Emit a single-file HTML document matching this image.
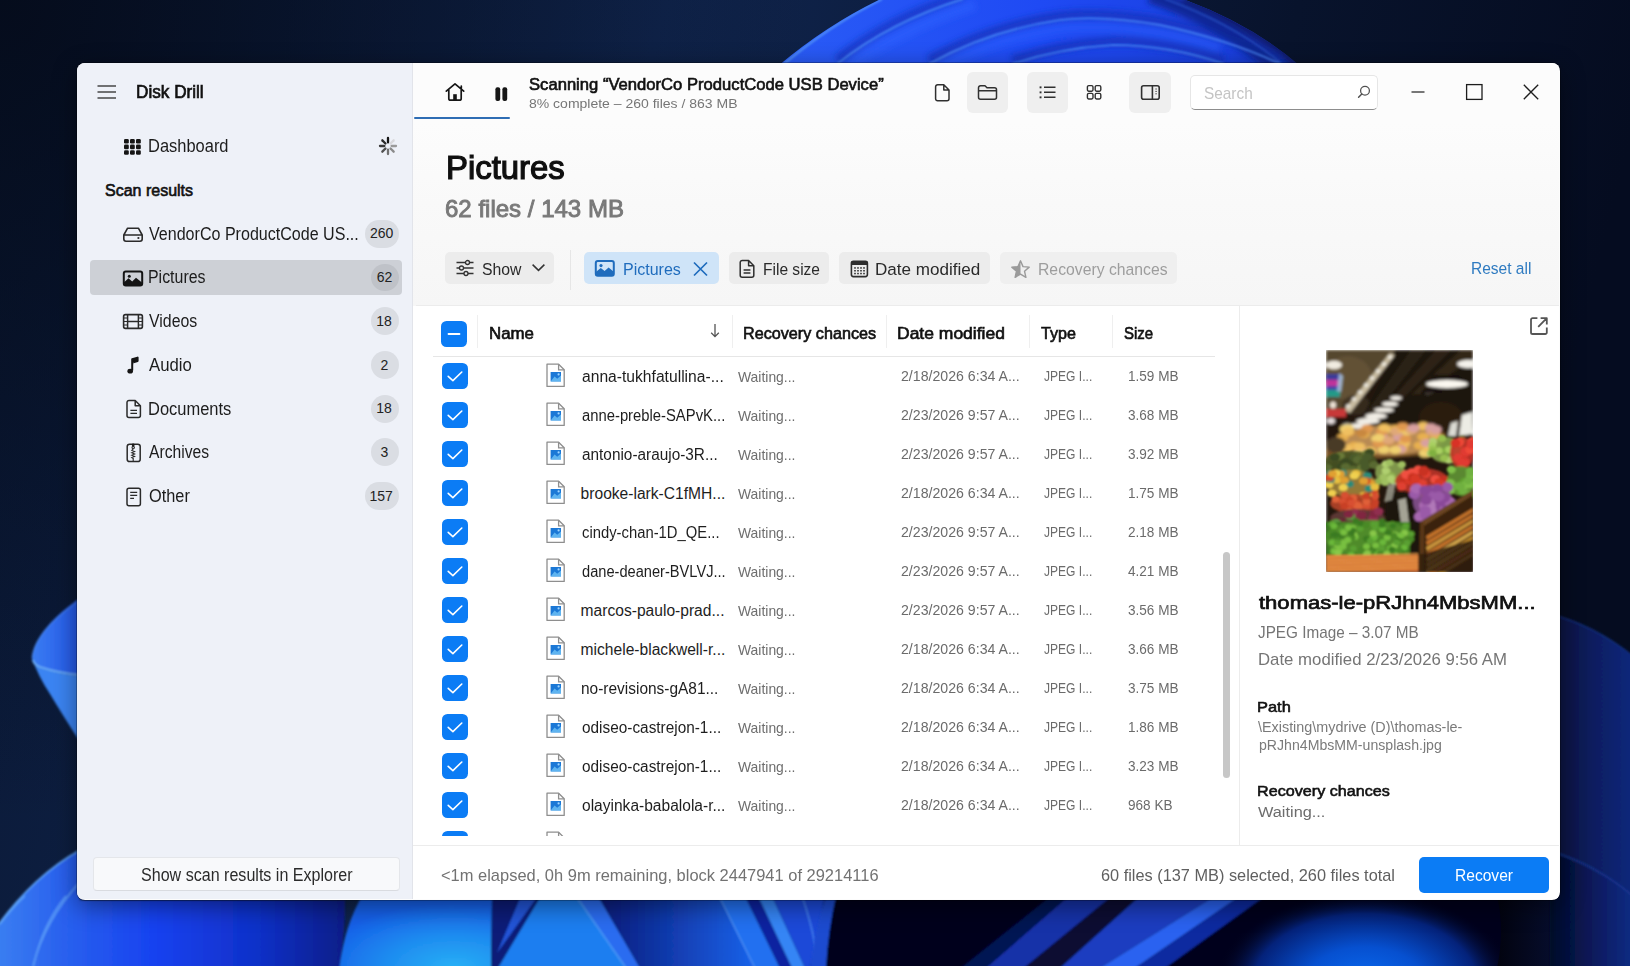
<!DOCTYPE html>
<html><head><meta charset="utf-8">
<style>
*{margin:0;padding:0;box-sizing:border-box}
html,body{width:1630px;height:966px;overflow:hidden;background:#0b1733;font-family:"Liberation Sans",sans-serif}
.a{position:absolute;white-space:nowrap;transform-origin:0 0}
.r{position:absolute}
svg.i{position:absolute;overflow:visible}
</style></head><body>
<svg style="position:absolute;left:0;top:0" width="1630" height="966" viewBox="0 0 1630 966">
<defs>
 <linearGradient id="nav" x1="0" y1="0" x2="1" y2="0.15">
  <stop offset="0" stop-color="#0a1834"/><stop offset="0.4" stop-color="#10254e"/><stop offset="0.78" stop-color="#08132c"/><stop offset="1" stop-color="#050c20"/>
 </linearGradient>
 <linearGradient id="topfill" x1="0" y1="0" x2="1" y2="0">
  <stop offset="0" stop-color="#2a5cf6"/><stop offset="0.5" stop-color="#1f4af4"/><stop offset="0.85" stop-color="#1a40e0"/><stop offset="1" stop-color="#0e2a9a"/>
 </linearGradient>
 <linearGradient id="blA" x1="0" y1="0" x2="1" y2="0">
  <stop offset="0" stop-color="#3a7ef2"/><stop offset="0.18" stop-color="#2a62ee"/><stop offset="0.45" stop-color="#1742f0"/><stop offset="0.75" stop-color="#1030c8"/><stop offset="1" stop-color="#0a1e88"/>
 </linearGradient>
 <radialGradient id="sky" cx="0.75" cy="1" r="0.9">
  <stop offset="0" stop-color="#28b0f6"/><stop offset="0.5" stop-color="#1e8cf0"/><stop offset="1" stop-color="#1660e8"/>
 </radialGradient>
 <radialGradient id="glow" cx="0.5" cy="0.5" r="0.5">
  <stop offset="0" stop-color="#0a6cf2"/><stop offset="0.4" stop-color="#0650d0"/><stop offset="0.75" stop-color="#04227a"/><stop offset="1" stop-color="#03051a" stop-opacity="0"/>
 </radialGradient>
 <linearGradient id="darkR" x1="0" y1="0" x2="1" y2="0">
  <stop offset="0" stop-color="#02030f"/><stop offset="1" stop-color="#0c1c5a"/>
 </linearGradient>
 <linearGradient id="midB" x1="0" y1="0" x2="1" y2="0">
  <stop offset="0" stop-color="#0a1a7a"/><stop offset="1" stop-color="#1a62ea"/>
 </linearGradient>
 <linearGradient id="petalU" x1="0" y1="0" x2="1" y2="0">
  <stop offset="0" stop-color="#3a7cf2"/><stop offset="1" stop-color="#2458e8"/>
 </linearGradient>
 <radialGradient id="tlc" cx="0" cy="0" r="0.5" gradientTransform="scale(1,1.7)">
  <stop offset="0" stop-color="#040a18" stop-opacity="0.85"/><stop offset="1" stop-color="#040a18" stop-opacity="0"/>
 </radialGradient>
 <linearGradient id="redge" x1="0" y1="0" x2="1" y2="-0.3">
  <stop offset="0" stop-color="#1a44d8"/><stop offset="0.5" stop-color="#0e2a98"/><stop offset="1" stop-color="#0a1a58"/>
 </linearGradient>
 <linearGradient id="rstrip" x1="0" y1="0" x2="1" y2="0">
  <stop offset="0" stop-color="#07123a"/><stop offset="0.6" stop-color="#0a2068"/><stop offset="1" stop-color="#0c2a80"/>
 </linearGradient>
 <linearGradient id="rstrip2" x1="0" y1="0" x2="1" y2="0">
  <stop offset="0" stop-color="#040a28"/><stop offset="0.6" stop-color="#0a1e68"/><stop offset="1" stop-color="#12308a"/>
 </linearGradient>
 <filter id="b1" x="-10%" y="-10%" width="120%" height="120%"><feGaussianBlur stdDeviation="0.8"/></filter>
 <filter id="b3" x="-10%" y="-10%" width="120%" height="120%"><feGaussianBlur stdDeviation="3"/></filter>
</defs>
<rect width="1630" height="966" fill="url(#nav)"/>
<rect width="1630" height="966" fill="url(#tlc)"/>
<!-- top bloom -->
<clipPath id="topclip"><path d="M778 66 Q 828 24 883 -2 L 1180 -2 Q 1252 24 1300 66 Z"/></clipPath>
<g clip-path="url(#topclip)">
 <rect x="770" y="-2" width="540" height="70" fill="url(#topfill)"/>
 <g filter="url(#b3)">
  <path d="M837 60 Q 890 18 963 -5" stroke="#1436c8" stroke-width="9" fill="none" opacity="0.9"/>
  <path d="M929 60 Q 990 26 1060 16 Q 1100 11 1160 21 Q 1230 36 1280 60" stroke="#1434c0" stroke-width="9" fill="none" opacity="0.9"/>
  <path d="M1012 60 Q 1060 44 1113 41 Q 1170 41 1224 60" stroke="#1434c0" stroke-width="9" fill="none" opacity="0.9"/>
  <path d="M1150 -5 Q 1225 22 1275 66" stroke="#0e2590" stroke-width="16" fill="none" opacity="0.9"/>
  <path d="M1185 -5 Q 1255 24 1305 66" stroke="#0a1a60" stroke-width="14" fill="none" opacity="0.9"/>
  <path d="M850 66 Q 900 30 975 5" stroke="#2c60ff" stroke-width="10" fill="none" opacity="0.6"/>
  <path d="M940 68 Q 1000 36 1070 28 Q 1150 24 1220 48" stroke="#2c60ff" stroke-width="10" fill="none" opacity="0.5"/>
 </g>
 <g filter="url(#b1)">
  <path d="M784 64 Q 830 25 882 -1" stroke="#5a9cf8" stroke-width="1.8" fill="none"/>
  <path d="M837 64 Q 890 22 963 -1" stroke="#5090f8" stroke-width="1.5" fill="none"/>
  <path d="M929 64 Q 990 30 1060 20 Q 1100 15 1160 25 Q 1230 40 1280 64" stroke="#4a88f6" stroke-width="1.5" fill="none"/>
  <path d="M1012 64 Q 1060 48 1113 45 Q 1170 45 1224 64" stroke="#4a88f6" stroke-width="1.5" fill="none"/>
  <path d="M1165 -1 Q 1236 25 1282 64" stroke="#3a70e8" stroke-width="1.2" fill="none" opacity="0.7"/>
 </g>
</g>
<!-- left petal -->
<g filter="url(#b1)">
 <path d="M80 598 C 55 615 33 638 32 658 Q 32 664 38 667 Q 58 674 80 676 Z" fill="url(#petalU)"/>
 <path d="M32 658 Q 32 664 38 667 Q 58 674 80 676 L 80 742 Q 62 714 50 694 Q 38 676 32 658 Z" fill="#3a84f2"/>
 <path d="M33 660 Q 34 665 40 667 Q 58 673 80 675" stroke="#70b4fa" stroke-width="1.6" fill="none"/>
 <path d="M80 600 C 55 617 34 638 32 658" stroke="#5a9af5" stroke-width="1" fill="none" opacity="0.6"/>
</g>
<!-- bottom left big shape -->
<g filter="url(#b1)">
 <path d="M-2 925 Q 35 875 80 850 L 80 900 L 345 900 Q 345 930 340 968 L -2 968 Z" fill="url(#blA)"/>
 <path d="M-2 925 Q 35 875 80 850" stroke="#5aa0f8" stroke-width="1.6" fill="none"/>
 <path d="M33 966 Q 45 920 80 882" stroke="#5a9cf8" stroke-width="1.3" fill="none"/>
 <path d="M0 924 Q 12 908 25 896" stroke="#5aa0f8" stroke-width="1.5" fill="none"/>
 <path d="M33 968 Q 42 925 66 896" stroke="#5a9cf8" stroke-width="1.3" fill="none"/>
</g>
<!-- bottom strip B -->
<g filter="url(#b1)">
 <path d="M339 968 Q 345 925 362 896 L 492 896 L 491 968 Z" fill="url(#sky)"/>
 <path d="M491 968 L 492 896 L 545 896 L 498 968 Z" fill="#0a1a78"/>
 <path d="M497 953 L 521 896 L 538 896 Z" fill="#2455d8"/>
 <path d="M498 968 L 541 896 L 576 896 L 626 968 Z" fill="#1f7ef0"/>
 <path d="M576 896 L 598 896 L 640 968 L 626 968 Z" fill="#2a6cf0"/>
 <path d="M598 896 L 719 896 L 755 968 L 640 968 Z" fill="url(#midB)"/>
 <path d="M719 896 L 745 896 L 780 968 L 755 968 Z" fill="#2270f0"/>
 <path d="M745 896 L 758 896 L 792 968 L 780 968 Z" fill="#0a24a0"/>
 <path d="M758 896 L 772 896 L 805 968 L 792 968 Z" fill="#3585f5"/>
 <path d="M772 896 L 830 896 L 830 968 L 805 968 Z" fill="#1a4ad8"/>
 <path d="M576 896 L 626 968" stroke="#4a9af8" stroke-width="1.4"/>
 <path d="M719 896 L 755 968" stroke="#4a90f6" stroke-width="1.4"/>
 <path d="M802 896 Q 812 925 816 950" stroke="#4a88f0" stroke-width="1.2" fill="none"/>
</g>
<!-- bottom strip C/D -->
<g filter="url(#b1)">
 <path d="M810 968 L 825 896 L 1640 896 L 1640 968 Z" fill="#03051a"/>
 <path d="M810 968 Q 815 930 826 896 L 836 896 Q 828 930 826 968 Z" fill="#1f4cd0"/>
 <path d="M961 968 L 1051 896 L 1069 896 L 986 968 Z" fill="#081560" opacity="0.8"/>
 <path d="M986 968 L 1069 896 L 1112 896 L 1024 968 Z" fill="#1530a8"/>
 <path d="M1024 968 L 1112 896 L 1140 896 L 1060 968 Z" fill="#071030"/>
 <path d="M1060 968 L 1140 896 L 1215 896 L 1100 968 Z" fill="#1a3cc0"/>
 <path d="M1100 968 L 1215 896 L 1240 896 L 1135 968 Z" fill="#2a62f0"/>
 <path d="M1135 968 L 1240 896 L 1265 896 L 1165 968 Z" fill="#0e2aa0"/>
</g>
<ellipse cx="1365" cy="985" rx="150" ry="95" fill="url(#glow)"/>
<path d="M1497 896 L 1640 896 L 1640 968 L 1497 968 Q 1505 930 1497 896 Z" fill="url(#darkR)"/>
<path d="M1590 896 Q 1620 925 1640 966 L 1640 896 Z" fill="#12308a" filter="url(#b3)" opacity="0.8"/>
<!-- right side strip -->
<g filter="url(#b1)">
 <path d="M1550 614 Q 1598 626 1640 662 L 1640 970 L 1550 970 Z" fill="url(#rstrip)"/>
 <path d="M1550 614 Q 1598 626 1640 662" stroke="#1a3488" stroke-width="1.5" fill="none" opacity="0.8"/>
 <path d="M1550 851 Q 1600 866 1640 902 L 1640 970 L 1550 970 Z" fill="url(#rstrip2)"/>
 <path d="M1550 851 Q 1600 866 1640 902" stroke="#1f3c9a" stroke-width="1.5" fill="none" opacity="0.8"/>
</g>
</svg>
<!-- window -->
<div class="r" style="left:77px;top:63px;width:1483px;height:837px;border-radius:8px;overflow:hidden;background:#fcfcfc;box-shadow:0 0 0 1px rgba(0,0,0,0.25),0 6px 24px rgba(0,0,0,0.45)">
  <!-- sidebar -->
  <div class="r" style="left:0;top:0;width:336px;height:836px;background:#eef1f8;border-right:1px solid #e2e4ea"></div>
  <!-- header gray area -->
  <div class="r" style="left:336px;top:0px;width:1146px;height:243px;background:linear-gradient(180deg,#fcfcfc 0px,#fcfcfc 60px,#f9f9f9 140px,#f6f6f6 243px)"></div>
  <div class="r" style="left:339px;top:242px;width:1143px;height:1px;background:#ececec"></div>
  <!-- table white area -->
  <div class="r" style="left:336px;top:243px;width:1146px;height:539px;background:#ffffff"></div>
  <!-- preview divider -->
  <div class="r" style="left:1162px;top:243px;width:1px;height:539px;background:#ececec"></div>
  <!-- status sep -->
  <div class="r" style="left:336px;top:782px;width:1146px;height:1px;background:#ececec"></div>
  <div class="r" style="left:336px;top:783px;width:1146px;height:53px;background:#ffffff"></div>
</div>
<div class="r" style="left:90px;top:260px;width:312px;height:35px;background:#cdd0d6;border-radius:4px;"></div>
<div class="r" style="left:365px;top:220px;width:33.5px;height:27.5px;background:#dadde3;border-radius:14px;"></div>
<div class="r" style="left:370.5px;top:263.5px;width:28px;height:27.5px;background:#bfc2c8;border-radius:14px;"></div>
<div class="r" style="left:370.7px;top:307px;width:28px;height:28px;background:#dadde3;border-radius:14px;"></div>
<div class="r" style="left:370.7px;top:351px;width:28px;height:28px;background:#dadde3;border-radius:14px;"></div>
<div class="r" style="left:370.7px;top:394.7px;width:28px;height:28px;background:#dadde3;border-radius:14px;"></div>
<div class="r" style="left:370.7px;top:438px;width:28px;height:28px;background:#dadde3;border-radius:14px;"></div>
<div class="r" style="left:365px;top:482px;width:33.5px;height:28px;background:#dadde3;border-radius:14px;"></div>
<div class="r" style="left:93px;top:857px;width:307px;height:34px;background:#f8f9fb;border-radius:4px;border:1px solid #e4e6ea;border-bottom-color:#d9dbe0"></div>
<svg class="i" style="left:96px;top:84px" width="22" height="16" viewBox="0 0 22 16"><path d="M1.5 2H20M1.5 8H20M1.5 14H20" stroke="#474747" stroke-width="1.5" fill="none"/></svg>
<svg class="i" style="left:124.4px;top:139px" width="17" height="16" viewBox="0 0 17 16"><rect x="0" y="0.0" width="4.8" height="4.6" rx="1.3" fill="#151515"/><rect x="6" y="0.0" width="4.8" height="4.6" rx="1.3" fill="#151515"/><rect x="12" y="0.0" width="4.8" height="4.6" rx="1.3" fill="#151515"/><rect x="0" y="5.6" width="4.8" height="4.6" rx="1.3" fill="#151515"/><rect x="6" y="5.6" width="4.8" height="4.6" rx="1.3" fill="#151515"/><rect x="12" y="5.6" width="4.8" height="4.6" rx="1.3" fill="#151515"/><rect x="0" y="11.2" width="4.8" height="4.6" rx="1.3" fill="#151515"/><rect x="6" y="11.2" width="4.8" height="4.6" rx="1.3" fill="#151515"/><rect x="12" y="11.2" width="4.8" height="4.6" rx="1.3" fill="#151515"/></svg>
<svg class="i" style="left:378.6px;top:137.1px" width="18" height="18" viewBox="0 0 18 18"><line x1="9.00" y1="5.40" x2="9.00" y2="1.00" stroke="#151515" stroke-width="2.3" stroke-linecap="round"/><line x1="11.55" y1="6.45" x2="14.66" y2="3.34" stroke="#d8d8dc" stroke-width="2.3" stroke-linecap="round"/><line x1="12.60" y1="9.00" x2="17.00" y2="9.00" stroke="#9a9a9a" stroke-width="2.3" stroke-linecap="round"/><line x1="11.55" y1="11.55" x2="14.66" y2="14.66" stroke="#8a8a8a" stroke-width="2.3" stroke-linecap="round"/><line x1="9.00" y1="12.60" x2="9.00" y2="17.00" stroke="#707070" stroke-width="2.3" stroke-linecap="round"/><line x1="6.45" y1="11.55" x2="3.34" y2="14.66" stroke="#505050" stroke-width="2.3" stroke-linecap="round"/><line x1="5.40" y1="9.00" x2="1.00" y2="9.00" stroke="#3a3a3a" stroke-width="2.3" stroke-linecap="round"/><line x1="6.45" y1="6.45" x2="3.34" y2="3.34" stroke="#2a2a2a" stroke-width="2.3" stroke-linecap="round"/></svg>
<svg class="i" style="left:122px;top:226px" width="22" height="17" viewBox="0 0 22 17"><path d="M5.6 2.2H16.4L20.2 9V13A2.2 2.2 0 0 1 18 15.2H4A2.2 2.2 0 0 1 1.8 13V9Z M1.8 9H20.2" stroke="#2a2a2a" stroke-width="1.6" fill="none" stroke-linejoin="round"/><circle cx="16.4" cy="12" r="1.1" fill="#2a2a2a"/></svg>
<svg class="i" style="left:122px;top:269.5px" width="22" height="17" viewBox="0 0 22 17"><rect x="1.8" y="1.6" width="18.4" height="13.8" rx="2" stroke="#141414" stroke-width="2" fill="none"/><path d="M1.8 15.4V12.6L6.5 8.2L10.2 11.4L14 7.8L20.2 12.8V15.4Z" fill="#141414"/><circle cx="7.3" cy="6.3" r="1.5" fill="#141414"/></svg>
<svg class="i" style="left:122px;top:312.7px" width="22" height="17" viewBox="0 0 22 17"><rect x="1.6" y="1.6" width="18.8" height="13.8" rx="1.8" stroke="#2a2a2a" stroke-width="1.6" fill="none"/><path d="M5.6 1.6V15.4M16.4 1.6V15.4M5.6 8.5H16.4" stroke="#2a2a2a" stroke-width="1.5"/><path d="M1.6 5H5.6M1.6 8.5H5.6M1.6 12H5.6M16.4 5H20.4M16.4 8.5H20.4M16.4 12H20.4" stroke="#2a2a2a" stroke-width="1"/></svg>
<svg class="i" style="left:126px;top:356px" width="14" height="19" viewBox="0 0 14 19"><path d="M6.2 14.6V3.2L11.6 1.6V5L7.4 6.3" stroke="#151515" stroke-width="2" fill="#151515" stroke-linejoin="round"/><ellipse cx="4.2" cy="15.2" rx="2.8" ry="2.4" fill="#151515"/></svg>
<svg class="i" style="left:125.5px;top:399px" width="16" height="20" viewBox="0 0 16 20"><path d="M3 1.5H9.2L14.4 6.7V16.5A2 2 0 0 1 12.4 18.5H3A2 2 0 0 1 1 16.5V3.5A2 2 0 0 1 3 1.5Z M9.2 1.5V6.7H14.4" stroke="#2a2a2a" stroke-width="1.5" fill="none" stroke-linejoin="round"/><path d="M4.4 11.4H11M4.4 14.4H11" stroke="#2a2a2a" stroke-width="1.4"/></svg>
<svg class="i" style="left:125.5px;top:443px" width="16" height="20" viewBox="0 0 16 20"><rect x="1.2" y="1.2" width="13" height="17.4" rx="2.4" stroke="#2a2a2a" stroke-width="1.5" fill="none"/><circle cx="7.2" cy="1.9" r="1.4" fill="#1a1a1a"/><circle cx="7.2" cy="4.6" r="1.2" stroke="#2a2a2a" stroke-width="1.1" fill="none"/><path d="M7.2 6.2L5.8 7.4L8.6 8.6L5.8 9.8L8.6 11L5.8 12.2L8.6 13.4L5.8 14.6L7.2 15.4V18" stroke="#2a2a2a" stroke-width="1.1" fill="none"/></svg>
<svg class="i" style="left:125.5px;top:487px" width="16" height="20" viewBox="0 0 16 20"><rect x="1" y="1.2" width="13.4" height="17.5" rx="2" stroke="#2a2a2a" stroke-width="1.5" fill="none"/><path d="M4.2 5.4H11.2M4.2 8.4H11.2M4.2 11.4H8" stroke="#2a2a2a" stroke-width="1.3"/></svg>
<div class="r" style="left:414px;top:117px;width:96px;height:2px;background:#2e6db4;border-radius:1px;"></div>
<svg class="i" style="left:444px;top:82px" width="22" height="20" viewBox="0 0 22 20"><path d="M2.3 9.2L11 1.8L19.7 9.2M17.3 7.2V4M4.8 7.8V16.4A1.8 1.8 0 0 0 6.6 18.2H15.4A1.8 1.8 0 0 0 17.2 16.4V7.8" stroke="#161616" stroke-width="1.7" fill="none" stroke-linejoin="round" stroke-linecap="round"/><rect x="9.2" y="12.2" width="3.6" height="6" fill="#161616"/></svg>
<svg class="i" style="left:494px;top:86px" width="16" height="16" viewBox="0 0 16 16"><rect x="1.4" y="1.2" width="4.8" height="13.8" rx="2" fill="#161616"/><rect x="8.4" y="1.2" width="4.8" height="13.8" rx="2" fill="#161616"/></svg>
<div class="r" style="left:967px;top:72px;width:41px;height:41px;background:#efefef;border-radius:6px;"></div>
<div class="r" style="left:1027px;top:72px;width:41px;height:41px;background:#efefef;border-radius:6px;"></div>
<div class="r" style="left:1129px;top:72px;width:42px;height:41px;background:#efefef;border-radius:6px;"></div>
<svg class="i" style="left:934px;top:83px" width="18" height="19" viewBox="0 0 18 19"><path d="M3.6 1.8H9.8L15 7V15.8A2 2 0 0 1 13 17.8H3.6A2 2 0 0 1 1.6 15.8V3.8A2 2 0 0 1 3.6 1.8Z M9.8 1.8V7H15" stroke="#303030" stroke-width="1.5" fill="none" stroke-linejoin="round"/></svg>
<svg class="i" style="left:977px;top:84px" width="22" height="17" viewBox="0 0 22 17"><path d="M3.5 1.8H8L10 3.8H17.5A2 2 0 0 1 19.5 5.8V13.2A2 2 0 0 1 17.5 15.2H3.5A2 2 0 0 1 1.5 13.2V3.8A2 2 0 0 1 3.5 1.8Z M1.5 6.8H19.5" stroke="#303030" stroke-width="1.5" fill="none" stroke-linejoin="round"/></svg>
<svg class="i" style="left:1038px;top:85px" width="20" height="15" viewBox="0 0 20 15"><path d="M6 2.3H17.5M6 7.3H17.5M6 12.3H17.5" stroke="#303030" stroke-width="1.6"/><rect x="1.6" y="1.4" width="1.9" height="1.9" fill="#303030"/><rect x="1.6" y="6.4" width="1.9" height="1.9" fill="#303030"/><rect x="1.6" y="11.4" width="1.9" height="1.9" fill="#303030"/></svg>
<svg class="i" style="left:1086px;top:84px" width="17" height="17" viewBox="0 0 17 17"><rect x="1.4" y="1.6" width="5.6" height="5.6" rx="1.4" stroke="#303030" stroke-width="1.4" fill="none"/><rect x="9.2" y="1.6" width="5.6" height="5.6" rx="1.4" stroke="#303030" stroke-width="1.4" fill="none"/><rect x="1.4" y="9.4" width="5.6" height="5.6" rx="1.4" stroke="#303030" stroke-width="1.4" fill="none"/><rect x="9.2" y="9.4" width="5.6" height="5.6" rx="1.4" stroke="#303030" stroke-width="1.4" fill="none"/></svg>
<svg class="i" style="left:1140px;top:84px" width="21" height="17" viewBox="0 0 21 17"><rect x="1.6" y="1.8" width="17.6" height="13.4" rx="2" stroke="#303030" stroke-width="1.6" fill="none"/><path d="M12.4 1.8V15.2" stroke="#303030" stroke-width="1.6"/><path d="M15.4 5H16.8M15.4 7.4H16.8M15.4 9.8H16.8" stroke="#303030" stroke-width="0.9"/></svg>
<div class="r" style="left:1190px;top:75px;width:188px;height:35px;background:#ffffff;border-radius:5px;border:1px solid #e6e6e6;border-bottom:1px solid #8d8d8d"></div>
<svg class="i" style="left:1356px;top:84px" width="16" height="16" viewBox="0 0 16 16"><circle cx="9" cy="6.8" r="4.4" stroke="#505050" stroke-width="1.25" fill="none"/><path d="M5.8 10L2.6 13.2" stroke="#505050" stroke-width="1.5" stroke-linecap="round"/></svg>
<svg class="i" style="left:1410px;top:90px" width="16" height="4" viewBox="0 0 16 4"><path d="M1.5 2H14.5" stroke="#1d1d1d" stroke-width="1.2"/></svg>
<svg class="i" style="left:1465px;top:83px" width="19" height="18" viewBox="0 0 19 18"><rect x="1.6" y="1.6" width="15.4" height="14.8" stroke="#1d1d1d" stroke-width="1.3" fill="none"/></svg>
<svg class="i" style="left:1522px;top:83px" width="18" height="18" viewBox="0 0 18 18"><path d="M1.8 1.8L16.2 16.2M16.2 1.8L1.8 16.2" stroke="#1d1d1d" stroke-width="1.3"/></svg>
<div class="r" style="left:445px;top:252px;width:109px;height:32px;background:#ececec;border-radius:5px;"></div>
<div class="r" style="left:584px;top:252px;width:134.5px;height:32px;background:#cfe4f8;border-radius:5px;"></div>
<div class="r" style="left:729px;top:252px;width:100px;height:32px;background:#ececec;border-radius:5px;"></div>
<div class="r" style="left:839px;top:252px;width:150.5px;height:32px;background:#ececec;border-radius:5px;"></div>
<div class="r" style="left:1000px;top:252px;width:177px;height:32px;background:#efefef;border-radius:5px;"></div>
<div class="r" style="left:570px;top:250px;width:1px;height:40px;background:#e6e6e6;border-radius:0px;"></div>
<svg class="i" style="left:455px;top:259px" width="20" height="18" viewBox="0 0 20 18"><path d="M1.5 3.5H18.5M1.5 9H18.5M1.5 14.5H18.5" stroke="#333" stroke-width="1.3"/><circle cx="12.5" cy="3.5" r="2" fill="#ececec" stroke="#333" stroke-width="1.3"/><circle cx="6.5" cy="9" r="2" fill="#ececec" stroke="#333" stroke-width="1.3"/><circle cx="11" cy="14.5" r="2" fill="#ececec" stroke="#333" stroke-width="1.3"/></svg>
<svg class="i" style="left:531px;top:262px" width="15" height="12" viewBox="0 0 15 12"><path d="M1.6 2.6L7.5 8.4L13.4 2.6" stroke="#333" stroke-width="1.5" fill="none"/></svg>
<svg class="i" style="left:594px;top:258.5px" width="22" height="19" viewBox="0 0 22 19"><rect x="1.8" y="2" width="18" height="14.8" rx="2" stroke="#1f6cbd" stroke-width="2" fill="none"/><path d="M1.8 16.8V13L6.8 9L10.6 12L14.6 8.4L19.8 12.8V16.8Z" fill="#1f6cbd"/><circle cx="7" cy="6.6" r="1.6" fill="#1f6cbd"/></svg>
<svg class="i" style="left:692px;top:261px" width="17" height="16" viewBox="0 0 17 16"><path d="M2 1.5L15 14.5M15 1.5L2 14.5" stroke="#1f6cbd" stroke-width="1.7"/></svg>
<svg class="i" style="left:739px;top:258.5px" width="17" height="20" viewBox="0 0 17 20"><path d="M3.2 1.5H9.6L14.8 6.7V16.2A2 2 0 0 1 12.8 18.2H3.2A2 2 0 0 1 1.2 16.2V3.5A2 2 0 0 1 3.2 1.5Z M9.6 1.5V6.7H14.8" stroke="#2e2e2e" stroke-width="1.5" fill="none" stroke-linejoin="round"/><path d="M4.6 11H11.4M4.6 14H11.4" stroke="#2e2e2e" stroke-width="1.3"/></svg>
<svg class="i" style="left:849.5px;top:259.5px" width="19" height="18" viewBox="0 0 19 18"><rect x="1.4" y="1.4" width="16" height="15.2" rx="2" stroke="#2e2e2e" stroke-width="1.6" fill="none"/><rect x="1.4" y="1.4" width="16" height="3.6" fill="#2e2e2e"/><rect x="4.2" y="7.2" width="1.6" height="1.5" fill="#2e2e2e"/><rect x="7.2" y="7.2" width="1.6" height="1.5" fill="#2e2e2e"/><rect x="10.2" y="7.2" width="1.6" height="1.5" fill="#2e2e2e"/><rect x="13.2" y="7.2" width="1.6" height="1.5" fill="#2e2e2e"/><rect x="4.2" y="10.0" width="1.6" height="1.5" fill="#2e2e2e"/><rect x="7.2" y="10.0" width="1.6" height="1.5" fill="#2e2e2e"/><rect x="10.2" y="10.0" width="1.6" height="1.5" fill="#2e2e2e"/><rect x="13.2" y="10.0" width="1.6" height="1.5" fill="#2e2e2e"/><rect x="4.2" y="12.8" width="1.6" height="1.5" fill="#2e2e2e"/><rect x="7.2" y="12.8" width="1.6" height="1.5" fill="#2e2e2e"/><rect x="10.2" y="12.8" width="1.6" height="1.5" fill="#2e2e2e"/><rect x="13.2" y="12.8" width="1.6" height="1.5" fill="#2e2e2e"/></svg>
<svg class="i" style="left:1010px;top:259px" width="21" height="20" viewBox="0 0 21 20"><path d="M10.5 1.8L13 7.6L19.2 8.1L14.5 12.2L15.9 18.3L10.5 15.1L5.1 18.3L6.5 12.2L1.8 8.1L8 7.6Z" stroke="#9a9a9a" stroke-width="1.4" fill="none" stroke-linejoin="round"/><path d="M10.5 1.8L8 7.6L1.8 8.1L6.5 12.2L5.1 18.3L10.5 15.1Z" fill="#9a9a9a"/></svg>
<svg class="i" style="left:441px;top:321px" width="26" height="26" viewBox="0 0 26 26"><rect x="0" y="0" width="26" height="26" rx="5.5" fill="#0b7cf5"/><path d="M7.5 13H18.5" stroke="#fff" stroke-width="1.8" stroke-linecap="round"/></svg>
<div class="r" style="left:477px;top:315px;width:1px;height:33px;background:#efefef;border-radius:0px;"></div>
<div class="r" style="left:731.5px;top:315px;width:1px;height:33px;background:#efefef;border-radius:0px;"></div>
<div class="r" style="left:885.5px;top:315px;width:1px;height:33px;background:#efefef;border-radius:0px;"></div>
<div class="r" style="left:1028.6px;top:315px;width:1px;height:33px;background:#efefef;border-radius:0px;"></div>
<div class="r" style="left:1111.7px;top:315px;width:1px;height:33px;background:#efefef;border-radius:0px;"></div>
<svg class="i" style="left:709px;top:322px" width="12" height="17" viewBox="0 0 12 17"><path d="M6 2V14.5M2.2 10.8L6 14.6L9.8 10.8" stroke="#555" stroke-width="1.3" fill="none"/></svg>
<div class="r" style="left:433px;top:356px;width:782px;height:1px;background:#e6e6e6;border-radius:0px;"></div>
<div class="r" style="left:414px;top:357px;width:820px;height:478.5px;overflow:hidden"><svg class="i" style="left:28px;top:6px" width="26" height="26" viewBox="0 0 26 26"><rect x="0" y="0" width="26" height="26" rx="5.5" fill="#0b7cf5"/><path d="M6.2 13.4L10.9 17.6L19.8 9.0" stroke="#fff" stroke-width="1.6" fill="none" stroke-linecap="round" stroke-linejoin="round"/></svg><svg class="i" style="left:131px;top:5.5px" width="21" height="25" viewBox="0 0 21 25"><path d="M2 1.2H13.6L19.2 6.8V23.4H2Z" fill="#fff" stroke="#8e8e8e" stroke-width="1.3" stroke-linejoin="round"/><path d="M13.6 1.2V6.8H19.2" fill="none" stroke="#8e8e8e" stroke-width="1.3"/><rect x="5.6" y="9" width="10.4" height="9.4" fill="#1b78d6"/><path d="M5.6 18.4L9.6 13.6L12.2 15.8L16 12.4V18.4Z" fill="#5fb4f0"/><circle cx="13.6" cy="11.4" r="1.1" fill="#9fd4ff"/></svg><svg class="i" style="left:28px;top:45px" width="26" height="26" viewBox="0 0 26 26"><rect x="0" y="0" width="26" height="26" rx="5.5" fill="#0b7cf5"/><path d="M6.2 13.4L10.9 17.6L19.8 9.0" stroke="#fff" stroke-width="1.6" fill="none" stroke-linecap="round" stroke-linejoin="round"/></svg><svg class="i" style="left:131px;top:44.5px" width="21" height="25" viewBox="0 0 21 25"><path d="M2 1.2H13.6L19.2 6.8V23.4H2Z" fill="#fff" stroke="#8e8e8e" stroke-width="1.3" stroke-linejoin="round"/><path d="M13.6 1.2V6.8H19.2" fill="none" stroke="#8e8e8e" stroke-width="1.3"/><rect x="5.6" y="9" width="10.4" height="9.4" fill="#1b78d6"/><path d="M5.6 18.4L9.6 13.6L12.2 15.8L16 12.4V18.4Z" fill="#5fb4f0"/><circle cx="13.6" cy="11.4" r="1.1" fill="#9fd4ff"/></svg><svg class="i" style="left:28px;top:84px" width="26" height="26" viewBox="0 0 26 26"><rect x="0" y="0" width="26" height="26" rx="5.5" fill="#0b7cf5"/><path d="M6.2 13.4L10.9 17.6L19.8 9.0" stroke="#fff" stroke-width="1.6" fill="none" stroke-linecap="round" stroke-linejoin="round"/></svg><svg class="i" style="left:131px;top:83.5px" width="21" height="25" viewBox="0 0 21 25"><path d="M2 1.2H13.6L19.2 6.8V23.4H2Z" fill="#fff" stroke="#8e8e8e" stroke-width="1.3" stroke-linejoin="round"/><path d="M13.6 1.2V6.8H19.2" fill="none" stroke="#8e8e8e" stroke-width="1.3"/><rect x="5.6" y="9" width="10.4" height="9.4" fill="#1b78d6"/><path d="M5.6 18.4L9.6 13.6L12.2 15.8L16 12.4V18.4Z" fill="#5fb4f0"/><circle cx="13.6" cy="11.4" r="1.1" fill="#9fd4ff"/></svg><svg class="i" style="left:28px;top:123px" width="26" height="26" viewBox="0 0 26 26"><rect x="0" y="0" width="26" height="26" rx="5.5" fill="#0b7cf5"/><path d="M6.2 13.4L10.9 17.6L19.8 9.0" stroke="#fff" stroke-width="1.6" fill="none" stroke-linecap="round" stroke-linejoin="round"/></svg><svg class="i" style="left:131px;top:122.5px" width="21" height="25" viewBox="0 0 21 25"><path d="M2 1.2H13.6L19.2 6.8V23.4H2Z" fill="#fff" stroke="#8e8e8e" stroke-width="1.3" stroke-linejoin="round"/><path d="M13.6 1.2V6.8H19.2" fill="none" stroke="#8e8e8e" stroke-width="1.3"/><rect x="5.6" y="9" width="10.4" height="9.4" fill="#1b78d6"/><path d="M5.6 18.4L9.6 13.6L12.2 15.8L16 12.4V18.4Z" fill="#5fb4f0"/><circle cx="13.6" cy="11.4" r="1.1" fill="#9fd4ff"/></svg><svg class="i" style="left:28px;top:162px" width="26" height="26" viewBox="0 0 26 26"><rect x="0" y="0" width="26" height="26" rx="5.5" fill="#0b7cf5"/><path d="M6.2 13.4L10.9 17.6L19.8 9.0" stroke="#fff" stroke-width="1.6" fill="none" stroke-linecap="round" stroke-linejoin="round"/></svg><svg class="i" style="left:131px;top:161.5px" width="21" height="25" viewBox="0 0 21 25"><path d="M2 1.2H13.6L19.2 6.8V23.4H2Z" fill="#fff" stroke="#8e8e8e" stroke-width="1.3" stroke-linejoin="round"/><path d="M13.6 1.2V6.8H19.2" fill="none" stroke="#8e8e8e" stroke-width="1.3"/><rect x="5.6" y="9" width="10.4" height="9.4" fill="#1b78d6"/><path d="M5.6 18.4L9.6 13.6L12.2 15.8L16 12.4V18.4Z" fill="#5fb4f0"/><circle cx="13.6" cy="11.4" r="1.1" fill="#9fd4ff"/></svg><svg class="i" style="left:28px;top:201px" width="26" height="26" viewBox="0 0 26 26"><rect x="0" y="0" width="26" height="26" rx="5.5" fill="#0b7cf5"/><path d="M6.2 13.4L10.9 17.6L19.8 9.0" stroke="#fff" stroke-width="1.6" fill="none" stroke-linecap="round" stroke-linejoin="round"/></svg><svg class="i" style="left:131px;top:200.5px" width="21" height="25" viewBox="0 0 21 25"><path d="M2 1.2H13.6L19.2 6.8V23.4H2Z" fill="#fff" stroke="#8e8e8e" stroke-width="1.3" stroke-linejoin="round"/><path d="M13.6 1.2V6.8H19.2" fill="none" stroke="#8e8e8e" stroke-width="1.3"/><rect x="5.6" y="9" width="10.4" height="9.4" fill="#1b78d6"/><path d="M5.6 18.4L9.6 13.6L12.2 15.8L16 12.4V18.4Z" fill="#5fb4f0"/><circle cx="13.6" cy="11.4" r="1.1" fill="#9fd4ff"/></svg><svg class="i" style="left:28px;top:240px" width="26" height="26" viewBox="0 0 26 26"><rect x="0" y="0" width="26" height="26" rx="5.5" fill="#0b7cf5"/><path d="M6.2 13.4L10.9 17.6L19.8 9.0" stroke="#fff" stroke-width="1.6" fill="none" stroke-linecap="round" stroke-linejoin="round"/></svg><svg class="i" style="left:131px;top:239.5px" width="21" height="25" viewBox="0 0 21 25"><path d="M2 1.2H13.6L19.2 6.8V23.4H2Z" fill="#fff" stroke="#8e8e8e" stroke-width="1.3" stroke-linejoin="round"/><path d="M13.6 1.2V6.8H19.2" fill="none" stroke="#8e8e8e" stroke-width="1.3"/><rect x="5.6" y="9" width="10.4" height="9.4" fill="#1b78d6"/><path d="M5.6 18.4L9.6 13.6L12.2 15.8L16 12.4V18.4Z" fill="#5fb4f0"/><circle cx="13.6" cy="11.4" r="1.1" fill="#9fd4ff"/></svg><svg class="i" style="left:28px;top:279px" width="26" height="26" viewBox="0 0 26 26"><rect x="0" y="0" width="26" height="26" rx="5.5" fill="#0b7cf5"/><path d="M6.2 13.4L10.9 17.6L19.8 9.0" stroke="#fff" stroke-width="1.6" fill="none" stroke-linecap="round" stroke-linejoin="round"/></svg><svg class="i" style="left:131px;top:278.5px" width="21" height="25" viewBox="0 0 21 25"><path d="M2 1.2H13.6L19.2 6.8V23.4H2Z" fill="#fff" stroke="#8e8e8e" stroke-width="1.3" stroke-linejoin="round"/><path d="M13.6 1.2V6.8H19.2" fill="none" stroke="#8e8e8e" stroke-width="1.3"/><rect x="5.6" y="9" width="10.4" height="9.4" fill="#1b78d6"/><path d="M5.6 18.4L9.6 13.6L12.2 15.8L16 12.4V18.4Z" fill="#5fb4f0"/><circle cx="13.6" cy="11.4" r="1.1" fill="#9fd4ff"/></svg><svg class="i" style="left:28px;top:318px" width="26" height="26" viewBox="0 0 26 26"><rect x="0" y="0" width="26" height="26" rx="5.5" fill="#0b7cf5"/><path d="M6.2 13.4L10.9 17.6L19.8 9.0" stroke="#fff" stroke-width="1.6" fill="none" stroke-linecap="round" stroke-linejoin="round"/></svg><svg class="i" style="left:131px;top:317.5px" width="21" height="25" viewBox="0 0 21 25"><path d="M2 1.2H13.6L19.2 6.8V23.4H2Z" fill="#fff" stroke="#8e8e8e" stroke-width="1.3" stroke-linejoin="round"/><path d="M13.6 1.2V6.8H19.2" fill="none" stroke="#8e8e8e" stroke-width="1.3"/><rect x="5.6" y="9" width="10.4" height="9.4" fill="#1b78d6"/><path d="M5.6 18.4L9.6 13.6L12.2 15.8L16 12.4V18.4Z" fill="#5fb4f0"/><circle cx="13.6" cy="11.4" r="1.1" fill="#9fd4ff"/></svg><svg class="i" style="left:28px;top:357px" width="26" height="26" viewBox="0 0 26 26"><rect x="0" y="0" width="26" height="26" rx="5.5" fill="#0b7cf5"/><path d="M6.2 13.4L10.9 17.6L19.8 9.0" stroke="#fff" stroke-width="1.6" fill="none" stroke-linecap="round" stroke-linejoin="round"/></svg><svg class="i" style="left:131px;top:356.5px" width="21" height="25" viewBox="0 0 21 25"><path d="M2 1.2H13.6L19.2 6.8V23.4H2Z" fill="#fff" stroke="#8e8e8e" stroke-width="1.3" stroke-linejoin="round"/><path d="M13.6 1.2V6.8H19.2" fill="none" stroke="#8e8e8e" stroke-width="1.3"/><rect x="5.6" y="9" width="10.4" height="9.4" fill="#1b78d6"/><path d="M5.6 18.4L9.6 13.6L12.2 15.8L16 12.4V18.4Z" fill="#5fb4f0"/><circle cx="13.6" cy="11.4" r="1.1" fill="#9fd4ff"/></svg><svg class="i" style="left:28px;top:396px" width="26" height="26" viewBox="0 0 26 26"><rect x="0" y="0" width="26" height="26" rx="5.5" fill="#0b7cf5"/><path d="M6.2 13.4L10.9 17.6L19.8 9.0" stroke="#fff" stroke-width="1.6" fill="none" stroke-linecap="round" stroke-linejoin="round"/></svg><svg class="i" style="left:131px;top:395.5px" width="21" height="25" viewBox="0 0 21 25"><path d="M2 1.2H13.6L19.2 6.8V23.4H2Z" fill="#fff" stroke="#8e8e8e" stroke-width="1.3" stroke-linejoin="round"/><path d="M13.6 1.2V6.8H19.2" fill="none" stroke="#8e8e8e" stroke-width="1.3"/><rect x="5.6" y="9" width="10.4" height="9.4" fill="#1b78d6"/><path d="M5.6 18.4L9.6 13.6L12.2 15.8L16 12.4V18.4Z" fill="#5fb4f0"/><circle cx="13.6" cy="11.4" r="1.1" fill="#9fd4ff"/></svg><svg class="i" style="left:28px;top:435px" width="26" height="26" viewBox="0 0 26 26"><rect x="0" y="0" width="26" height="26" rx="5.5" fill="#0b7cf5"/><path d="M6.2 13.4L10.9 17.6L19.8 9.0" stroke="#fff" stroke-width="1.6" fill="none" stroke-linecap="round" stroke-linejoin="round"/></svg><svg class="i" style="left:131px;top:434.5px" width="21" height="25" viewBox="0 0 21 25"><path d="M2 1.2H13.6L19.2 6.8V23.4H2Z" fill="#fff" stroke="#8e8e8e" stroke-width="1.3" stroke-linejoin="round"/><path d="M13.6 1.2V6.8H19.2" fill="none" stroke="#8e8e8e" stroke-width="1.3"/><rect x="5.6" y="9" width="10.4" height="9.4" fill="#1b78d6"/><path d="M5.6 18.4L9.6 13.6L12.2 15.8L16 12.4V18.4Z" fill="#5fb4f0"/><circle cx="13.6" cy="11.4" r="1.1" fill="#9fd4ff"/></svg><svg class="i" style="left:28px;top:474px" width="26" height="26" viewBox="0 0 26 26"><rect x="0" y="0" width="26" height="26" rx="5.5" fill="#0b7cf5"/><path d="M6.2 13.4L10.9 17.6L19.8 9.0" stroke="#fff" stroke-width="1.6" fill="none" stroke-linecap="round" stroke-linejoin="round"/></svg><svg class="i" style="left:131px;top:473.5px" width="21" height="25" viewBox="0 0 21 25"><path d="M2 1.2H13.6L19.2 6.8V23.4H2Z" fill="#fff" stroke="#8e8e8e" stroke-width="1.3" stroke-linejoin="round"/><path d="M13.6 1.2V6.8H19.2" fill="none" stroke="#8e8e8e" stroke-width="1.3"/><rect x="5.6" y="9" width="10.4" height="9.4" fill="#1b78d6"/><path d="M5.6 18.4L9.6 13.6L12.2 15.8L16 12.4V18.4Z" fill="#5fb4f0"/><circle cx="13.6" cy="11.4" r="1.1" fill="#9fd4ff"/></svg></div>
<div class="r" style="left:414px;top:845px;width:1145px;height:1px;background:#ececec;border-radius:0px;"></div>
<div class="r" style="left:1223px;top:552px;width:7px;height:226px;background:#c7c7c7;border-radius:3.5px;"></div>
<svg class="i" style="left:1529px;top:316px" width="21" height="20" viewBox="0 0 21 20"><path d="M8.4 2.2H3.6A1.6 1.6 0 0 0 2 3.8V16.4A1.6 1.6 0 0 0 3.6 18H16.2A1.6 1.6 0 0 0 17.8 16.4V11.6M11.6 2.2H17.8V8.4M17.8 2.2L9.2 10.8" stroke="#555" stroke-width="1.8" fill="none" stroke-linejoin="round"/></svg>
<div class="r" style="left:1419px;top:857px;width:130px;height:36px;background:#0b7cf5;border-radius:5px;"></div><svg class="i" style="left:1326px;top:350px" width="147" height="222" viewBox="0 0 147 222">
<defs><filter id="fb" x="-5%" y="-5%" width="110%" height="110%"><feGaussianBlur stdDeviation="0.9"/></filter><filter id="fb2" x="-5%" y="-5%" width="110%" height="110%"><feGaussianBlur stdDeviation="1.4"/></filter><clipPath id="ic"><rect width="147" height="222"/></clipPath></defs>
<g clip-path="url(#ic)"><g filter="url(#fb2)"><rect x="0" y="0" width="147" height="222" fill="#22170e" opacity="1"/>
<polygon points="0,0 70,0 20,60 0,60" fill="#55462e" opacity="1"/>
<ellipse cx="22" cy="28" rx="24" ry="22" fill="#6a583a" opacity="0.6"/>
<ellipse cx="30" cy="55" rx="14" ry="10" fill="#3a2e22" opacity="0.8"/>
<polygon points="70,0 147,0 147,40 60,80 30,80" fill="#1c140d" opacity="1"/>
<polygon points="85,0 100,0 45,70 35,70" fill="#30241a" opacity="0.8"/>
<polygon points="110,0 125,0 70,55 60,55" fill="#3a2c20" opacity="0.6"/>
<polygon points="135,0 147,0 147,8 95,45 85,45" fill="#3a2a1c" opacity="0.8"/>
<polygon points="18,60 64,3 69,5 24,63" fill="#d8ccb0" opacity="0.9"/>
<ellipse cx="22" cy="56" rx="2" ry="1.5" fill="#fffdf5" opacity="1"/>
<ellipse cx="28" cy="49" rx="2" ry="1.5" fill="#fffdf5" opacity="1"/>
<ellipse cx="34" cy="42" rx="2" ry="1.5" fill="#fffdf5" opacity="1"/>
<ellipse cx="40" cy="35" rx="2" ry="1.5" fill="#fffdf5" opacity="1"/>
<ellipse cx="46" cy="28" rx="2" ry="1.5" fill="#fffdf5" opacity="1"/>
<ellipse cx="52" cy="21" rx="2" ry="1.5" fill="#fffdf5" opacity="1"/>
<ellipse cx="58" cy="14" rx="2" ry="1.5" fill="#fffdf5" opacity="1"/>
<ellipse cx="64" cy="7" rx="2" ry="1.5" fill="#fffdf5" opacity="1"/>
<ellipse cx="70" cy="48" rx="6" ry="2" fill="#f2eee6" opacity="1"/>
<ellipse cx="64" cy="54" rx="8" ry="2.4" fill="#f2eee6" opacity="1"/>
<ellipse cx="58" cy="60" rx="10" ry="2.6" fill="#f2eee6" opacity="1"/>
<ellipse cx="50" cy="66" rx="11" ry="3" fill="#f2eee6" opacity="1"/>
<ellipse cx="42" cy="71" rx="12" ry="3" fill="#f2eee6" opacity="1"/>
<ellipse cx="34" cy="76" rx="11" ry="3" fill="#f2eee6" opacity="1"/>
<ellipse cx="8" cy="15" rx="8" ry="4.2" fill="#f0ebe0" opacity="1"/>
<polygon points="108,25 132,25 146,35 98,35" fill="#120d0a" opacity="1"/>
<ellipse cx="121" cy="34" rx="21" ry="4" fill="#fbf8f0" opacity="1"/>
<ellipse cx="142" cy="14" rx="11" ry="4" fill="#f4f2ec" opacity="1"/>
<polygon points="98,38 114,38 118,45 94,45" fill="#120d0a" opacity="1"/>
<ellipse cx="106" cy="45" rx="9" ry="2.2" fill="#e8e2d8" opacity="1"/>
<rect x="0" y="24" width="14" height="8" fill="#3a3a9a" opacity="1"/>
<rect x="0" y="30" width="13" height="6" fill="#c2309a" opacity="1"/>
<rect x="0" y="36" width="13" height="5" fill="#4040a8" opacity="1"/>
<rect x="0" y="40" width="14" height="7" fill="#209a88" opacity="1"/>
<polygon points="13,23 17,26 15,42 11,41" fill="#b0d0f0" opacity="0.8"/>
<rect x="0" y="59" width="20" height="8" fill="#c83838" opacity="1"/>
<ellipse cx="7" cy="55" rx="3" ry="3.5" fill="#f0e4d8" opacity="1"/>
<ellipse cx="5" cy="71" rx="4" ry="3" fill="#e8e0e0" opacity="1"/>
<ellipse cx="21" cy="76" rx="5" ry="3" fill="#e0e8e0" opacity="0.7"/>
<polygon points="80,45 147,40 147,92 88,92" fill="#1e140c" opacity="1"/>
<ellipse cx="115" cy="68" rx="22" ry="16" fill="#2e1e14" opacity="0.7"/>
<polygon points="136,65 146,62 147,84 133,86" fill="#ecece4" opacity="1"/>
<polygon points="125,73 132,71 130,86 122,86" fill="#dcdcd4" opacity="1"/>
<ellipse cx="109" cy="83" rx="3" ry="6" fill="#d0d0c8" opacity="0.8"/>
<ellipse cx="88" cy="84" rx="2.5" ry="5" fill="#c8c8c0" opacity="0.7"/>
<polygon points="0,92 30,80 100,74 120,84 110,104 0,112" fill="#7a5228" opacity="1"/>
<ellipse cx="63.5" cy="90.0" rx="49.5" ry="15.0" fill="#bf9056" opacity="0.9"/>
<ellipse cx="58.9" cy="91.7" rx="6" ry="4" fill="#c88840" opacity="1"/>
<ellipse cx="60.2" cy="90.2" rx="6" ry="4" fill="#f0d070" opacity="1"/>
<ellipse cx="33.4" cy="98.5" rx="6" ry="4" fill="#d8a0a0" opacity="1"/>
<ellipse cx="76.1" cy="98.2" rx="6" ry="4" fill="#e8b050" opacity="1"/>
<ellipse cx="58.3" cy="80.0" rx="6" ry="4" fill="#f0d070" opacity="1"/>
<ellipse cx="93.5" cy="95.4" rx="6" ry="4" fill="#e8b050" opacity="1"/>
<ellipse cx="72.8" cy="87.1" rx="6" ry="4" fill="#d8a0a0" opacity="1"/>
<ellipse cx="78.4" cy="93.2" rx="6" ry="4" fill="#f0c060" opacity="1"/>
<ellipse cx="75.4" cy="99.3" rx="6" ry="4" fill="#e8b050" opacity="1"/>
<ellipse cx="20.8" cy="81.3" rx="6" ry="4" fill="#f0c060" opacity="1"/>
<ellipse cx="73.2" cy="97.8" rx="6" ry="4" fill="#e09850" opacity="1"/>
<ellipse cx="57.7" cy="99.6" rx="6" ry="4" fill="#f0d070" opacity="1"/>
<ellipse cx="37.7" cy="84.2" rx="6" ry="4" fill="#e8b050" opacity="1"/>
<ellipse cx="79.3" cy="88.8" rx="6" ry="4" fill="#e09850" opacity="1"/>
<ellipse cx="54.5" cy="91.4" rx="6" ry="4" fill="#c88840" opacity="1"/>
<ellipse cx="23.1" cy="83.1" rx="6" ry="4" fill="#c88840" opacity="1"/>
<ellipse cx="37.3" cy="84.1" rx="6" ry="4" fill="#e8b050" opacity="1"/>
<ellipse cx="69.6" cy="79.0" rx="6" ry="4" fill="#e8b050" opacity="1"/>
<ellipse cx="97.1" cy="86.8" rx="6" ry="4" fill="#e8b050" opacity="1"/>
<ellipse cx="97.2" cy="76.0" rx="6" ry="4" fill="#f0c060" opacity="1"/>
<ellipse cx="104.9" cy="77.5" rx="6" ry="4" fill="#d8a0a0" opacity="1"/>
<ellipse cx="110.1" cy="87.1" rx="6" ry="4" fill="#e8b050" opacity="1"/>
<ellipse cx="69.9" cy="81.6" rx="6" ry="4" fill="#e0a878" opacity="1"/>
<ellipse cx="41.2" cy="78.4" rx="6" ry="4" fill="#e09850" opacity="1"/>
<ellipse cx="16.5" cy="87.5" rx="6" ry="4" fill="#e8b050" opacity="1"/>
<ellipse cx="28.1" cy="95.8" rx="6" ry="4" fill="#e8b050" opacity="1"/>
<ellipse cx="20.8" cy="98.3" rx="6" ry="4" fill="#f0c060" opacity="1"/>
<ellipse cx="81.2" cy="81.3" rx="6" ry="4" fill="#f0d070" opacity="1"/>
<ellipse cx="33.5" cy="96.5" rx="6" ry="4" fill="#f0c060" opacity="1"/>
<ellipse cx="55.7" cy="86.7" rx="6" ry="4" fill="#d8a0a0" opacity="1"/>
<ellipse cx="55.8" cy="82.0" rx="6" ry="4" fill="#e09850" opacity="1"/>
<ellipse cx="98.8" cy="103.3" rx="6" ry="4" fill="#f0d070" opacity="1"/>
<ellipse cx="44.5" cy="100.8" rx="6" ry="4" fill="#f0c060" opacity="1"/>
<ellipse cx="33.2" cy="103.9" rx="6" ry="4" fill="#f0d070" opacity="1"/>
<ellipse cx="77.3" cy="78.8" rx="6" ry="4" fill="#f0c060" opacity="1"/>
<ellipse cx="35.7" cy="83.2" rx="6" ry="4" fill="#c88840" opacity="1"/>
<ellipse cx="74.2" cy="99.2" rx="6" ry="4" fill="#d8a0a0" opacity="1"/>
<ellipse cx="22.1" cy="78.5" rx="6" ry="4" fill="#f0d070" opacity="1"/>
<ellipse cx="76.7" cy="76.4" rx="6" ry="4" fill="#e09850" opacity="1"/>
<ellipse cx="51.1" cy="88.7" rx="6" ry="4" fill="#f0d070" opacity="1"/>
<ellipse cx="61.9" cy="92.1" rx="6" ry="4" fill="#c88840" opacity="1"/>
<ellipse cx="52.5" cy="93.6" rx="6" ry="4" fill="#e09850" opacity="1"/>
<ellipse cx="103.1" cy="98.9" rx="6" ry="4" fill="#f0c060" opacity="1"/>
<ellipse cx="85.4" cy="80.4" rx="6" ry="4" fill="#e0a878" opacity="1"/>
<ellipse cx="106.2" cy="81.5" rx="6" ry="4" fill="#d8a0a0" opacity="1"/>
<ellipse cx="100.6" cy="92.9" rx="6" ry="4" fill="#d8a0a0" opacity="1"/>
<ellipse cx="19.6" cy="79.1" rx="6" ry="4" fill="#f0d070" opacity="1"/>
<ellipse cx="108.4" cy="82.7" rx="6" ry="4" fill="#e0a878" opacity="1"/>
<ellipse cx="53.0" cy="87.8" rx="6" ry="4" fill="#f0d070" opacity="1"/>
<ellipse cx="62.6" cy="90.6" rx="6" ry="4" fill="#e0a878" opacity="1"/>
<ellipse cx="109.8" cy="79.5" rx="6" ry="4" fill="#d8a0a0" opacity="1"/>
<ellipse cx="69.3" cy="99.9" rx="6" ry="4" fill="#f0d070" opacity="1"/>
<ellipse cx="22.2" cy="81.9" rx="6" ry="4" fill="#f0c060" opacity="1"/>
<ellipse cx="87.7" cy="77.9" rx="6" ry="4" fill="#d8a0a0" opacity="1"/>
<ellipse cx="58.2" cy="77.7" rx="6" ry="4" fill="#f0c060" opacity="1"/>
<ellipse cx="10" cy="95" rx="10" ry="8" fill="#4a3a28" opacity="1"/></g><g filter="url(#fb)"><ellipse cx="120.0" cy="100.0" rx="17.0" ry="13.0" fill="#84a64a" opacity="0.9"/>
<ellipse cx="113.0" cy="100.7" rx="4" ry="3.5" fill="#a8d060" opacity="1"/>
<ellipse cx="107.0" cy="91.3" rx="4" ry="3.5" fill="#b0d070" opacity="1"/>
<ellipse cx="135.4" cy="103.8" rx="4" ry="3.5" fill="#a8d060" opacity="1"/>
<ellipse cx="122.9" cy="110.2" rx="4" ry="3.5" fill="#b0d070" opacity="1"/>
<ellipse cx="133.1" cy="104.8" rx="4" ry="3.5" fill="#98c050" opacity="1"/>
<ellipse cx="104.7" cy="103.3" rx="4" ry="3.5" fill="#b0d070" opacity="1"/>
<ellipse cx="106.2" cy="95.5" rx="4" ry="3.5" fill="#a8d060" opacity="1"/>
<ellipse cx="136.0" cy="89.8" rx="4" ry="3.5" fill="#80b040" opacity="1"/>
<ellipse cx="127.6" cy="109.6" rx="4" ry="3.5" fill="#a8d060" opacity="1"/>
<ellipse cx="129.4" cy="110.0" rx="4" ry="3.5" fill="#80b040" opacity="1"/>
<ellipse cx="106.7" cy="99.4" rx="4" ry="3.5" fill="#98c050" opacity="1"/>
<ellipse cx="131.9" cy="98.0" rx="4" ry="3.5" fill="#98c050" opacity="1"/>
<ellipse cx="131.6" cy="101.7" rx="4" ry="3.5" fill="#b0d070" opacity="1"/>
<ellipse cx="116.1" cy="88.3" rx="4" ry="3.5" fill="#98c050" opacity="1"/>
<ellipse cx="106.6" cy="103.3" rx="4" ry="3.5" fill="#80b040" opacity="1"/>
<ellipse cx="132.2" cy="105.5" rx="4" ry="3.5" fill="#b0d070" opacity="1"/>
<ellipse cx="133.9" cy="104.7" rx="4" ry="3.5" fill="#b0d070" opacity="1"/>
<ellipse cx="118.1" cy="108.1" rx="4" ry="3.5" fill="#98c050" opacity="1"/>
<ellipse cx="120.6" cy="100.3" rx="4" ry="3.5" fill="#80b040" opacity="1"/>
<ellipse cx="123.2" cy="99.5" rx="4" ry="3.5" fill="#a8d060" opacity="1"/>
<ellipse cx="136.0" cy="103.0" rx="12.0" ry="16.0" fill="#c03328" opacity="0.9"/>
<ellipse cx="146.1" cy="91.4" rx="5" ry="4.5" fill="#f04a38" opacity="1"/>
<ellipse cx="139.5" cy="102.6" rx="5" ry="4.5" fill="#e03a30" opacity="1"/>
<ellipse cx="133.1" cy="92.3" rx="5" ry="4.5" fill="#f04a38" opacity="1"/>
<ellipse cx="129.5" cy="93.1" rx="5" ry="4.5" fill="#d83028" opacity="1"/>
<ellipse cx="139.5" cy="101.3" rx="5" ry="4.5" fill="#e03a30" opacity="1"/>
<ellipse cx="132.2" cy="108.0" rx="5" ry="4.5" fill="#e03a30" opacity="1"/>
<ellipse cx="139.0" cy="112.1" rx="5" ry="4.5" fill="#e03a30" opacity="1"/>
<ellipse cx="144.4" cy="99.5" rx="5" ry="4.5" fill="#f04a38" opacity="1"/>
<ellipse cx="145.3" cy="94.3" rx="5" ry="4.5" fill="#e03a30" opacity="1"/>
<ellipse cx="135.9" cy="113.1" rx="5" ry="4.5" fill="#e03a30" opacity="1"/>
<ellipse cx="25.0" cy="111.5" rx="26.0" ry="10.5" fill="#455326" opacity="0.9"/>
<ellipse cx="35.6" cy="120.1" rx="5" ry="4" fill="#3a4a22" opacity="1"/>
<ellipse cx="41.1" cy="104.1" rx="5" ry="4" fill="#6a7a38" opacity="1"/>
<ellipse cx="13.8" cy="106.1" rx="5" ry="4" fill="#6a7a38" opacity="1"/>
<ellipse cx="19.1" cy="111.9" rx="5" ry="4" fill="#3a4a22" opacity="1"/>
<ellipse cx="35.8" cy="118.0" rx="5" ry="4" fill="#6a7a38" opacity="1"/>
<ellipse cx="16.0" cy="117.7" rx="5" ry="4" fill="#3a4a22" opacity="1"/>
<ellipse cx="43.6" cy="102.8" rx="5" ry="4" fill="#3a4a22" opacity="1"/>
<ellipse cx="28.5" cy="107.9" rx="5" ry="4" fill="#4a5a2a" opacity="1"/>
<ellipse cx="32.0" cy="109.7" rx="5" ry="4" fill="#5a6a30" opacity="1"/>
<ellipse cx="1.2" cy="117.8" rx="5" ry="4" fill="#5a6a30" opacity="1"/>
<ellipse cx="39.0" cy="117.1" rx="5" ry="4" fill="#4a5a2a" opacity="1"/>
<ellipse cx="22.3" cy="114.0" rx="5" ry="4" fill="#3a4a22" opacity="1"/>
<ellipse cx="47.9" cy="115.0" rx="5" ry="4" fill="#5a6a30" opacity="1"/>
<ellipse cx="41.2" cy="106.9" rx="5" ry="4" fill="#4a5a2a" opacity="1"/>
<ellipse cx="37.8" cy="112.2" rx="5" ry="4" fill="#4a5a2a" opacity="1"/>
<ellipse cx="9.0" cy="107.2" rx="5" ry="4" fill="#3a4a22" opacity="1"/>
<ellipse cx="27.0" cy="120.0" rx="5" ry="4" fill="#5a6a30" opacity="1"/>
<ellipse cx="19.7" cy="117.0" rx="5" ry="4" fill="#5a6a30" opacity="1"/>
<ellipse cx="64.0" cy="122.5" rx="15.0" ry="11.5" fill="#88a351" opacity="0.9"/>
<ellipse cx="52.4" cy="131.6" rx="4" ry="3.5" fill="#90b050" opacity="1"/>
<ellipse cx="60.9" cy="121.5" rx="4" ry="3.5" fill="#a0c060" opacity="1"/>
<ellipse cx="67.5" cy="131.1" rx="4" ry="3.5" fill="#b0d070" opacity="1"/>
<ellipse cx="65.4" cy="125.7" rx="4" ry="3.5" fill="#90b050" opacity="1"/>
<ellipse cx="72.3" cy="131.8" rx="4" ry="3.5" fill="#b0d070" opacity="1"/>
<ellipse cx="59.1" cy="132.6" rx="4" ry="3.5" fill="#a0c060" opacity="1"/>
<ellipse cx="70.2" cy="129.2" rx="4" ry="3.5" fill="#90b050" opacity="1"/>
<ellipse cx="75.9" cy="114.6" rx="4" ry="3.5" fill="#a0c060" opacity="1"/>
<ellipse cx="75.2" cy="132.6" rx="4" ry="3.5" fill="#b0d070" opacity="1"/>
<ellipse cx="65.0" cy="128.6" rx="4" ry="3.5" fill="#b0d070" opacity="1"/>
<ellipse cx="57.3" cy="127.1" rx="4" ry="3.5" fill="#a0c060" opacity="1"/>
<ellipse cx="59.8" cy="113.7" rx="4" ry="3.5" fill="#b0d070" opacity="1"/>
<ellipse cx="59.6" cy="120.8" rx="4" ry="3.5" fill="#b0d070" opacity="1"/>
<ellipse cx="63.6" cy="112.6" rx="4" ry="3.5" fill="#a0c060" opacity="1"/>
<ellipse cx="96.0" cy="131.0" rx="27.0" ry="13.0" fill="#bb3427" opacity="0.9"/>
<ellipse cx="92.3" cy="119.8" rx="5" ry="4.5" fill="#f05040" opacity="1"/>
<ellipse cx="105.7" cy="141.0" rx="5" ry="4.5" fill="#c83020" opacity="1"/>
<ellipse cx="77.7" cy="131.4" rx="5" ry="4.5" fill="#c83020" opacity="1"/>
<ellipse cx="119.2" cy="130.8" rx="5" ry="4.5" fill="#e04030" opacity="1"/>
<ellipse cx="109.4" cy="129.5" rx="5" ry="4.5" fill="#f05040" opacity="1"/>
<ellipse cx="113.2" cy="132.5" rx="5" ry="4.5" fill="#d83828" opacity="1"/>
<ellipse cx="97.2" cy="139.2" rx="5" ry="4.5" fill="#f05040" opacity="1"/>
<ellipse cx="86.2" cy="128.1" rx="5" ry="4.5" fill="#d83828" opacity="1"/>
<ellipse cx="85.8" cy="122.4" rx="5" ry="4.5" fill="#f05040" opacity="1"/>
<ellipse cx="99.8" cy="123.8" rx="5" ry="4.5" fill="#e04030" opacity="1"/>
<ellipse cx="96.2" cy="133.5" rx="5" ry="4.5" fill="#e04030" opacity="1"/>
<ellipse cx="98.0" cy="120.1" rx="5" ry="4.5" fill="#c83020" opacity="1"/>
<ellipse cx="98.3" cy="142.7" rx="5" ry="4.5" fill="#e04030" opacity="1"/>
<ellipse cx="95.5" cy="135.6" rx="5" ry="4.5" fill="#e04030" opacity="1"/>
<ellipse cx="118.4" cy="130.0" rx="5" ry="4.5" fill="#c83020" opacity="1"/>
<ellipse cx="84.0" cy="130.4" rx="5" ry="4.5" fill="#d83828" opacity="1"/>
<ellipse cx="87.7" cy="140.6" rx="5" ry="4.5" fill="#c83020" opacity="1"/>
<ellipse cx="97.3" cy="121.6" rx="5" ry="4.5" fill="#c83020" opacity="1"/>
<ellipse cx="102.1" cy="141.2" rx="5" ry="4.5" fill="#d83828" opacity="1"/>
<ellipse cx="106.5" cy="142.5" rx="5" ry="4.5" fill="#e04030" opacity="1"/>
<ellipse cx="80.1" cy="124.5" rx="5" ry="4.5" fill="#f05040" opacity="1"/>
<ellipse cx="86.7" cy="127.5" rx="5" ry="4.5" fill="#c83020" opacity="1"/>
<ellipse cx="75.5" cy="136.5" rx="5" ry="4.5" fill="#e04030" opacity="1"/>
<ellipse cx="114.3" cy="134.0" rx="5" ry="4.5" fill="#d83828" opacity="1"/>
<ellipse cx="106.5" cy="140.1" rx="5" ry="4.5" fill="#e04030" opacity="1"/>
<ellipse cx="89.5" cy="128.9" rx="5" ry="4.5" fill="#d83828" opacity="1"/>
<ellipse cx="134.5" cy="131.0" rx="13.5" ry="15.0" fill="#5f9534" opacity="0.9"/>
<ellipse cx="135.5" cy="141.2" rx="4.5" ry="4" fill="#60a030" opacity="1"/>
<ellipse cx="138.0" cy="131.8" rx="4.5" ry="4" fill="#60a030" opacity="1"/>
<ellipse cx="137.3" cy="141.0" rx="4.5" ry="4" fill="#70b040" opacity="1"/>
<ellipse cx="144.9" cy="134.6" rx="4.5" ry="4" fill="#80c048" opacity="1"/>
<ellipse cx="144.6" cy="125.8" rx="4.5" ry="4" fill="#80c048" opacity="1"/>
<ellipse cx="144.3" cy="122.5" rx="4.5" ry="4" fill="#70b040" opacity="1"/>
<ellipse cx="144.2" cy="120.8" rx="4.5" ry="4" fill="#70b040" opacity="1"/>
<ellipse cx="125.3" cy="119.5" rx="4.5" ry="4" fill="#80c048" opacity="1"/>
<ellipse cx="124.4" cy="140.3" rx="4.5" ry="4" fill="#80c048" opacity="1"/>
<ellipse cx="135.6" cy="136.7" rx="4.5" ry="4" fill="#70b040" opacity="1"/>
<ellipse cx="132.1" cy="136.2" rx="4.5" ry="4" fill="#70b040" opacity="1"/>
<ellipse cx="124.4" cy="133.0" rx="4.5" ry="4" fill="#80c048" opacity="1"/>
<ellipse cx="144.8" cy="144.1" rx="4.5" ry="4" fill="#70b040" opacity="1"/>
<ellipse cx="139.6" cy="134.8" rx="4.5" ry="4" fill="#80c048" opacity="1"/>
<ellipse cx="134.6" cy="136.2" rx="4.5" ry="4" fill="#70b040" opacity="1"/>
<ellipse cx="142.1" cy="130.5" rx="4.5" ry="4" fill="#70b040" opacity="1"/>
<ellipse cx="25.0" cy="133.5" rx="25.0" ry="13.5" fill="#a0833b" opacity="0.9"/>
<ellipse cx="2.8" cy="134.8" rx="4.5" ry="3.5" fill="#f0d050" opacity="1"/>
<ellipse cx="44.4" cy="133.0" rx="4.5" ry="3.5" fill="#e0a030" opacity="1"/>
<ellipse cx="9.9" cy="126.1" rx="4.5" ry="3.5" fill="#e0a030" opacity="1"/>
<ellipse cx="48.5" cy="144.2" rx="4.5" ry="3.5" fill="#e8c040" opacity="1"/>
<ellipse cx="28.8" cy="124.4" rx="4.5" ry="3.5" fill="#2a8a78" opacity="1"/>
<ellipse cx="4.7" cy="123.4" rx="4.5" ry="3.5" fill="#2a8a78" opacity="1"/>
<ellipse cx="23.4" cy="133.9" rx="4.5" ry="3.5" fill="#2a8a78" opacity="1"/>
<ellipse cx="11.1" cy="130.3" rx="4.5" ry="3.5" fill="#e8c040" opacity="1"/>
<ellipse cx="41.5" cy="125.5" rx="4.5" ry="3.5" fill="#2a8a78" opacity="1"/>
<ellipse cx="18.3" cy="130.3" rx="4.5" ry="3.5" fill="#e0a030" opacity="1"/>
<ellipse cx="30.0" cy="123.4" rx="4.5" ry="3.5" fill="#e8c040" opacity="1"/>
<ellipse cx="16.5" cy="123.1" rx="4.5" ry="3.5" fill="#2a8a78" opacity="1"/>
<ellipse cx="28.3" cy="125.8" rx="4.5" ry="3.5" fill="#f0d050" opacity="1"/>
<ellipse cx="48.2" cy="141.1" rx="4.5" ry="3.5" fill="#d04a28" opacity="1"/>
<ellipse cx="14.4" cy="123.9" rx="4.5" ry="3.5" fill="#e0a030" opacity="1"/>
<ellipse cx="40.1" cy="131.1" rx="4.5" ry="3.5" fill="#d04a28" opacity="1"/>
<ellipse cx="43.2" cy="138.4" rx="4.5" ry="3.5" fill="#2a8a78" opacity="1"/>
<ellipse cx="37.7" cy="131.1" rx="4.5" ry="3.5" fill="#e0a030" opacity="1"/>
<ellipse cx="4.4" cy="129.5" rx="4.5" ry="3.5" fill="#2a8a78" opacity="1"/>
<ellipse cx="5.8" cy="143.2" rx="4.5" ry="3.5" fill="#f0d050" opacity="1"/>
<ellipse cx="3.4" cy="127.8" rx="4.5" ry="3.5" fill="#d04a28" opacity="1"/>
<ellipse cx="17.2" cy="137.5" rx="4.5" ry="3.5" fill="#f0d050" opacity="1"/>
<ellipse cx="9.7" cy="122.9" rx="4.5" ry="3.5" fill="#f0d050" opacity="1"/>
<ellipse cx="49.0" cy="137.1" rx="4.5" ry="3.5" fill="#e8c040" opacity="1"/>
<ellipse cx="37.6" cy="145.5" rx="4.5" ry="3.5" fill="#e8c040" opacity="1"/>
<ellipse cx="6.5" cy="123.7" rx="4.5" ry="3.5" fill="#e0a030" opacity="1"/>
<ellipse cx="28.5" cy="153.5" rx="24.5" ry="9.5" fill="#b54428" opacity="0.9"/>
<ellipse cx="17.1" cy="151.8" rx="4" ry="3.5" fill="#d85030" opacity="1"/>
<ellipse cx="40.8" cy="156.0" rx="4" ry="3.5" fill="#d85030" opacity="1"/>
<ellipse cx="9.6" cy="149.3" rx="4" ry="3.5" fill="#e06038" opacity="1"/>
<ellipse cx="30.9" cy="153.6" rx="4" ry="3.5" fill="#c84028" opacity="1"/>
<ellipse cx="31.7" cy="161.9" rx="4" ry="3.5" fill="#c84028" opacity="1"/>
<ellipse cx="25.9" cy="156.0" rx="4" ry="3.5" fill="#c84028" opacity="1"/>
<ellipse cx="33.1" cy="157.9" rx="4" ry="3.5" fill="#d85030" opacity="1"/>
<ellipse cx="23.2" cy="161.0" rx="4" ry="3.5" fill="#e06038" opacity="1"/>
<ellipse cx="27.2" cy="147.9" rx="4" ry="3.5" fill="#e06038" opacity="1"/>
<ellipse cx="30.5" cy="155.1" rx="4" ry="3.5" fill="#e06038" opacity="1"/>
<ellipse cx="49.4" cy="152.2" rx="4" ry="3.5" fill="#c84028" opacity="1"/>
<ellipse cx="23.7" cy="150.3" rx="4" ry="3.5" fill="#c84028" opacity="1"/>
<ellipse cx="18.4" cy="156.1" rx="4" ry="3.5" fill="#c84028" opacity="1"/>
<ellipse cx="48.7" cy="156.3" rx="4" ry="3.5" fill="#c84028" opacity="1"/>
<ellipse cx="18.9" cy="145.2" rx="4" ry="3.5" fill="#d85030" opacity="1"/>
<ellipse cx="32.5" cy="155.8" rx="4" ry="3.5" fill="#e06038" opacity="1"/>
<ellipse cx="40.5" cy="151.6" rx="4" ry="3.5" fill="#e06038" opacity="1"/>
<ellipse cx="40.2" cy="145.9" rx="4" ry="3.5" fill="#c84028" opacity="1"/>
<ellipse cx="49.4" cy="146.2" rx="4" ry="3.5" fill="#d85030" opacity="1"/>
<ellipse cx="25.2" cy="153.1" rx="4" ry="3.5" fill="#d85030" opacity="1"/>
<polygon points="60,140 92,145 95,222 60,222" fill="#1a120a" opacity="1"/>
<polygon points="72,150 80,148 84,180 76,182" fill="#c8c8b8" opacity="0.8"/>
<polygon points="62,135 70,133 66,150 58,152" fill="#b8b8a8" opacity="0.7"/>
<ellipse cx="107.0" cy="152.0" rx="20.0" ry="17.0" fill="#875290" opacity="0.9"/>
<ellipse cx="89.7" cy="139.2" rx="5.5" ry="5" fill="#b078b8" opacity="1"/>
<ellipse cx="93.5" cy="166.7" rx="5.5" ry="5" fill="#a868b0" opacity="1"/>
<ellipse cx="110.9" cy="139.7" rx="5.5" ry="5" fill="#b078b8" opacity="1"/>
<ellipse cx="105.3" cy="142.5" rx="5.5" ry="5" fill="#9a5aa8" opacity="1"/>
<ellipse cx="101.6" cy="141.0" rx="5.5" ry="5" fill="#8a4a98" opacity="1"/>
<ellipse cx="104.8" cy="157.4" rx="5.5" ry="5" fill="#b078b8" opacity="1"/>
<ellipse cx="110.8" cy="156.5" rx="5.5" ry="5" fill="#b078b8" opacity="1"/>
<ellipse cx="101.8" cy="159.8" rx="5.5" ry="5" fill="#a868b0" opacity="1"/>
<ellipse cx="124.2" cy="159.5" rx="5.5" ry="5" fill="#a868b0" opacity="1"/>
<ellipse cx="106.3" cy="152.1" rx="5.5" ry="5" fill="#8a4a98" opacity="1"/>
<ellipse cx="117.8" cy="156.0" rx="5.5" ry="5" fill="#8a4a98" opacity="1"/>
<ellipse cx="98.4" cy="155.5" rx="5.5" ry="5" fill="#a868b0" opacity="1"/>
<ellipse cx="112.1" cy="160.1" rx="5.5" ry="5" fill="#a868b0" opacity="1"/>
<ellipse cx="124.2" cy="152.1" rx="5.5" ry="5" fill="#a868b0" opacity="1"/>
<ellipse cx="121.4" cy="137.3" rx="5.5" ry="5" fill="#9a5aa8" opacity="1"/>
<ellipse cx="88.4" cy="144.3" rx="5.5" ry="5" fill="#9a5aa8" opacity="1"/>
<ellipse cx="111.7" cy="139.3" rx="5.5" ry="5" fill="#8a4a98" opacity="1"/>
<ellipse cx="90.8" cy="138.8" rx="5.5" ry="5" fill="#a868b0" opacity="1"/>
<ellipse cx="108.9" cy="156.2" rx="5.5" ry="5" fill="#8a4a98" opacity="1"/>
<ellipse cx="106.4" cy="147.3" rx="5.5" ry="5" fill="#8a4a98" opacity="1"/>
<ellipse cx="101.1" cy="159.8" rx="5.5" ry="5" fill="#9a5aa8" opacity="1"/>
<ellipse cx="118.5" cy="150.3" rx="5.5" ry="5" fill="#a868b0" opacity="1"/>
<ellipse cx="104.9" cy="159.9" rx="5.5" ry="5" fill="#b078b8" opacity="1"/>
<ellipse cx="118.8" cy="147.8" rx="5.5" ry="5" fill="#8a4a98" opacity="1"/>
<ellipse cx="99.1" cy="160.3" rx="5.5" ry="5" fill="#a868b0" opacity="1"/>
<ellipse cx="104.3" cy="147.8" rx="5.5" ry="5" fill="#9a5aa8" opacity="1"/>
<ellipse cx="105.6" cy="146.4" rx="5.5" ry="5" fill="#9a5aa8" opacity="1"/>
<ellipse cx="104.4" cy="154.2" rx="5.5" ry="5" fill="#b078b8" opacity="1"/>
<ellipse cx="99.4" cy="160.8" rx="5.5" ry="5" fill="#9a5aa8" opacity="1"/>
<ellipse cx="99.8" cy="165.1" rx="5.5" ry="5" fill="#9a5aa8" opacity="1"/>
<ellipse cx="114.4" cy="151.8" rx="5.5" ry="5" fill="#8a4a98" opacity="1"/>
<ellipse cx="98.8" cy="140.6" rx="5.5" ry="5" fill="#8a4a98" opacity="1"/>
<ellipse cx="113.0" cy="146.5" rx="5.5" ry="5" fill="#9a5aa8" opacity="1"/>
<ellipse cx="100.3" cy="150.1" rx="5.5" ry="5" fill="#8a4a98" opacity="1"/>
<ellipse cx="31.5" cy="168.0" rx="27.5" ry="9.0" fill="#633a38" opacity="0.9"/>
<ellipse cx="28.2" cy="172.8" rx="5" ry="4" fill="#6a2038" opacity="1"/>
<ellipse cx="29.3" cy="163.5" rx="5" ry="4" fill="#902f50" opacity="1"/>
<ellipse cx="9.5" cy="173.3" rx="5" ry="4" fill="#802840" opacity="1"/>
<ellipse cx="24.3" cy="166.3" rx="5" ry="4" fill="#5a9a40" opacity="1"/>
<ellipse cx="47.2" cy="171.8" rx="5" ry="4" fill="#6a2038" opacity="1"/>
<ellipse cx="47.2" cy="168.6" rx="5" ry="4" fill="#902f50" opacity="1"/>
<ellipse cx="14.4" cy="172.1" rx="5" ry="4" fill="#6a2038" opacity="1"/>
<ellipse cx="48.0" cy="163.5" rx="5" ry="4" fill="#802840" opacity="1"/>
<ellipse cx="33.8" cy="169.1" rx="5" ry="4" fill="#802840" opacity="1"/>
<ellipse cx="39.5" cy="172.9" rx="5" ry="4" fill="#802840" opacity="1"/>
<ellipse cx="35.8" cy="164.9" rx="5" ry="4" fill="#802840" opacity="1"/>
<ellipse cx="22.7" cy="164.4" rx="5" ry="4" fill="#802840" opacity="1"/>
<ellipse cx="52.7" cy="161.4" rx="5" ry="4" fill="#902f50" opacity="1"/>
<ellipse cx="10.2" cy="173.1" rx="5" ry="4" fill="#5a9a40" opacity="1"/>
<rect x="0" y="172" width="84" height="34" fill="#3e7a22" opacity="1"/>
<ellipse cx="43.0" cy="188.5" rx="44.0" ry="18.5" fill="#528d2c" opacity="0.9"/>
<ellipse cx="21.1" cy="178.7" rx="3.4" ry="3" fill="#88c848" opacity="1"/>
<ellipse cx="29.1" cy="187.1" rx="3.4" ry="3" fill="#78c040" opacity="1"/>
<ellipse cx="29.1" cy="204.9" rx="3.4" ry="3" fill="#4a8a28" opacity="1"/>
<ellipse cx="11.8" cy="188.1" rx="3.4" ry="3" fill="#4a8a28" opacity="1"/>
<ellipse cx="6.2" cy="192.6" rx="3.4" ry="3" fill="#6ab83a" opacity="1"/>
<ellipse cx="35.3" cy="199.9" rx="3.4" ry="3" fill="#4a8a28" opacity="1"/>
<ellipse cx="30.0" cy="171.1" rx="3.4" ry="3" fill="#3a7a20" opacity="1"/>
<ellipse cx="71.7" cy="202.1" rx="3.4" ry="3" fill="#88c848" opacity="1"/>
<ellipse cx="55.1" cy="189.3" rx="3.4" ry="3" fill="#4a8a28" opacity="1"/>
<ellipse cx="0.9" cy="174.8" rx="3.4" ry="3" fill="#3a7a20" opacity="1"/>
<ellipse cx="78.7" cy="179.6" rx="3.4" ry="3" fill="#5aa030" opacity="1"/>
<ellipse cx="85.2" cy="184.1" rx="3.4" ry="3" fill="#5aa030" opacity="1"/>
<ellipse cx="27.6" cy="184.6" rx="3.4" ry="3" fill="#88c848" opacity="1"/>
<ellipse cx="25.1" cy="204.9" rx="3.4" ry="3" fill="#6ab83a" opacity="1"/>
<ellipse cx="40.5" cy="196.6" rx="3.4" ry="3" fill="#78c040" opacity="1"/>
<ellipse cx="55.7" cy="198.2" rx="3.4" ry="3" fill="#5aa030" opacity="1"/>
<ellipse cx="78.4" cy="197.4" rx="3.4" ry="3" fill="#6ab83a" opacity="1"/>
<ellipse cx="50.2" cy="202.8" rx="3.4" ry="3" fill="#6ab83a" opacity="1"/>
<ellipse cx="26.9" cy="177.9" rx="3.4" ry="3" fill="#78c040" opacity="1"/>
<ellipse cx="18.7" cy="179.2" rx="3.4" ry="3" fill="#4a8a28" opacity="1"/>
<ellipse cx="40.6" cy="188.8" rx="3.4" ry="3" fill="#3a7a20" opacity="1"/>
<ellipse cx="15.9" cy="180.8" rx="3.4" ry="3" fill="#5aa030" opacity="1"/>
<ellipse cx="78.3" cy="203.8" rx="3.4" ry="3" fill="#4a8a28" opacity="1"/>
<ellipse cx="47.1" cy="199.6" rx="3.4" ry="3" fill="#3a7a20" opacity="1"/>
<ellipse cx="73.4" cy="188.0" rx="3.4" ry="3" fill="#3a7a20" opacity="1"/>
<ellipse cx="78.6" cy="183.0" rx="3.4" ry="3" fill="#88c848" opacity="1"/>
<ellipse cx="66.4" cy="174.2" rx="3.4" ry="3" fill="#5aa030" opacity="1"/>
<ellipse cx="34.4" cy="178.6" rx="3.4" ry="3" fill="#5aa030" opacity="1"/>
<ellipse cx="68.9" cy="184.5" rx="3.4" ry="3" fill="#88c848" opacity="1"/>
<ellipse cx="68.3" cy="198.1" rx="3.4" ry="3" fill="#6ab83a" opacity="1"/>
<ellipse cx="56.5" cy="179.3" rx="3.4" ry="3" fill="#6ab83a" opacity="1"/>
<ellipse cx="75.2" cy="202.7" rx="3.4" ry="3" fill="#3a7a20" opacity="1"/>
<ellipse cx="68.5" cy="196.0" rx="3.4" ry="3" fill="#88c848" opacity="1"/>
<ellipse cx="75.2" cy="185.6" rx="3.4" ry="3" fill="#78c040" opacity="1"/>
<ellipse cx="12.4" cy="202.8" rx="3.4" ry="3" fill="#88c848" opacity="1"/>
<ellipse cx="11.3" cy="197.0" rx="3.4" ry="3" fill="#88c848" opacity="1"/>
<ellipse cx="22.9" cy="189.7" rx="3.4" ry="3" fill="#5aa030" opacity="1"/>
<ellipse cx="49.2" cy="177.2" rx="3.4" ry="3" fill="#5aa030" opacity="1"/>
<ellipse cx="70.6" cy="200.6" rx="3.4" ry="3" fill="#5aa030" opacity="1"/>
<ellipse cx="7.1" cy="180.4" rx="3.4" ry="3" fill="#4a8a28" opacity="1"/>
<ellipse cx="45.4" cy="202.1" rx="3.4" ry="3" fill="#4a8a28" opacity="1"/>
<ellipse cx="40.3" cy="204.4" rx="3.4" ry="3" fill="#88c848" opacity="1"/>
<ellipse cx="46.7" cy="188.7" rx="3.4" ry="3" fill="#6ab83a" opacity="1"/>
<ellipse cx="67.9" cy="185.6" rx="3.4" ry="3" fill="#4a8a28" opacity="1"/>
<ellipse cx="7.8" cy="199.9" rx="3.4" ry="3" fill="#5aa030" opacity="1"/>
<ellipse cx="3.2" cy="185.5" rx="3.4" ry="3" fill="#3a7a20" opacity="1"/>
<ellipse cx="13.5" cy="200.1" rx="3.4" ry="3" fill="#78c040" opacity="1"/>
<ellipse cx="27.2" cy="185.2" rx="3.4" ry="3" fill="#88c848" opacity="1"/>
<ellipse cx="26.3" cy="187.4" rx="3.4" ry="3" fill="#4a8a28" opacity="1"/>
<ellipse cx="5.8" cy="173.6" rx="3.4" ry="3" fill="#5aa030" opacity="1"/>
<ellipse cx="9.1" cy="184.8" rx="3.4" ry="3" fill="#3a7a20" opacity="1"/>
<ellipse cx="64.2" cy="198.5" rx="3.4" ry="3" fill="#6ab83a" opacity="1"/>
<ellipse cx="56.2" cy="171.4" rx="3.4" ry="3" fill="#3a7a20" opacity="1"/>
<ellipse cx="61.2" cy="187.6" rx="3.4" ry="3" fill="#78c040" opacity="1"/>
<ellipse cx="48.5" cy="187.0" rx="3.4" ry="3" fill="#6ab83a" opacity="1"/>
<ellipse cx="73.6" cy="200.6" rx="3.4" ry="3" fill="#4a8a28" opacity="1"/>
<ellipse cx="17.8" cy="192.6" rx="3.4" ry="3" fill="#78c040" opacity="1"/>
<ellipse cx="54.0" cy="203.8" rx="3.4" ry="3" fill="#4a8a28" opacity="1"/>
<ellipse cx="25.6" cy="182.8" rx="3.4" ry="3" fill="#3a7a20" opacity="1"/>
<ellipse cx="47.8" cy="174.0" rx="3.4" ry="3" fill="#5aa030" opacity="1"/>
<ellipse cx="17.2" cy="196.6" rx="3.4" ry="3" fill="#78c040" opacity="1"/>
<ellipse cx="26.6" cy="180.6" rx="3.4" ry="3" fill="#3a7a20" opacity="1"/>
<ellipse cx="62.2" cy="182.6" rx="3.4" ry="3" fill="#3a7a20" opacity="1"/>
<ellipse cx="7.9" cy="175.9" rx="3.4" ry="3" fill="#6ab83a" opacity="1"/>
<ellipse cx="11.3" cy="193.1" rx="3.4" ry="3" fill="#5aa030" opacity="1"/>
<ellipse cx="15.5" cy="185.1" rx="3.4" ry="3" fill="#3a7a20" opacity="1"/>
<ellipse cx="51.0" cy="174.2" rx="3.4" ry="3" fill="#5aa030" opacity="1"/>
<ellipse cx="2.8" cy="205.6" rx="3.4" ry="3" fill="#3a7a20" opacity="1"/>
<ellipse cx="35.0" cy="173.5" rx="3.4" ry="3" fill="#3a7a20" opacity="1"/>
<ellipse cx="79.7" cy="175.9" rx="3.4" ry="3" fill="#5aa030" opacity="1"/>
<ellipse cx="66.0" cy="199.7" rx="3.4" ry="3" fill="#3a7a20" opacity="1"/>
<ellipse cx="41.5" cy="203.2" rx="3.4" ry="3" fill="#88c848" opacity="1"/>
<ellipse cx="1.3" cy="185.0" rx="3.4" ry="3" fill="#4a8a28" opacity="1"/>
<ellipse cx="27.3" cy="198.6" rx="3.4" ry="3" fill="#5aa030" opacity="1"/>
<ellipse cx="56.8" cy="192.3" rx="3.4" ry="3" fill="#6ab83a" opacity="1"/>
<ellipse cx="22.4" cy="177.6" rx="3.4" ry="3" fill="#78c040" opacity="1"/>
<ellipse cx="56.0" cy="174.7" rx="3.4" ry="3" fill="#3a7a20" opacity="1"/>
<ellipse cx="17.6" cy="182.6" rx="3.4" ry="3" fill="#78c040" opacity="1"/>
<ellipse cx="71.0" cy="192.4" rx="3.4" ry="3" fill="#5aa030" opacity="1"/>
<ellipse cx="21.8" cy="189.9" rx="3.4" ry="3" fill="#78c040" opacity="1"/>
<ellipse cx="47.1" cy="183.3" rx="3.4" ry="3" fill="#88c848" opacity="1"/>
<ellipse cx="44.2" cy="191.1" rx="3.4" ry="3" fill="#5aa030" opacity="1"/>
<ellipse cx="84.9" cy="189.1" rx="3.4" ry="3" fill="#4a8a28" opacity="1"/>
<ellipse cx="60.8" cy="203.8" rx="3.4" ry="3" fill="#88c848" opacity="1"/>
<ellipse cx="81.3" cy="192.9" rx="3.4" ry="3" fill="#5aa030" opacity="1"/>
<ellipse cx="66.8" cy="175.8" rx="3.4" ry="3" fill="#3a7a20" opacity="1"/>
<ellipse cx="49.6" cy="195.4" rx="3.4" ry="3" fill="#78c040" opacity="1"/>
<ellipse cx="7.9" cy="201.5" rx="3.4" ry="3" fill="#78c040" opacity="1"/>
<ellipse cx="39.8" cy="175.3" rx="3.4" ry="3" fill="#4a8a28" opacity="1"/>
<ellipse cx="11.7" cy="202.6" rx="3.4" ry="3" fill="#88c848" opacity="1"/>
<polygon points="92,222 94,172 147,140 147,222" fill="#3a2410" opacity="1"/>
<polygon points="100,186.0 147,158.0 147,162.0 101,190.0" fill="#d07a30" opacity="0.9"/>
<polygon points="100,191.5 147,163.5 147,167.5 101,195.5" fill="#d07a30" opacity="0.9"/>
<polygon points="100,197.0 147,169.0 147,173.0 101,201.0" fill="#d8a040" opacity="0.9"/>
<polygon points="100,202.5 147,174.5 147,178.5 101,206.5" fill="#d07a30" opacity="0.9"/>
<polygon points="100,208.0 147,180.0 147,184.0 101,212.0" fill="#e0b050" opacity="0.9"/>
<polygon points="100,213.5 147,185.5 147,189.5 101,217.5" fill="#c89030" opacity="0.9"/>
<polygon points="100,219.0 147,191.0 147,195.0 101,223.0" fill="#e0b050" opacity="0.9"/>
<polygon points="100,224.5 147,196.5 147,200.5 101,228.5" fill="#d07a30" opacity="0.9"/>
<polygon points="100,230.0 147,202.0 147,206.0 101,234.0" fill="#c89030" opacity="0.9"/>
<polygon points="94,172 147,140 147,145 96,177" fill="#6a4420" opacity="1"/>
<rect x="94" y="172" width="4" height="50" fill="#5a3818" opacity="1"/>
<rect x="0" y="205" width="94" height="17" fill="#d07030" opacity="1"/>
<polygon points="0,206.0 92,203.0 92,205.0 0,208.0" fill="#f0a050" opacity="0.7"/>
<polygon points="0,209.4 92,206.4 92,208.4 0,211.4" fill="#f0a050" opacity="0.7"/>
<polygon points="0,212.8 92,209.8 92,211.8 0,214.8" fill="#f0a050" opacity="0.7"/>
<polygon points="0,216.2 92,213.2 92,215.2 0,218.2" fill="#f0a050" opacity="0.7"/>
<polygon points="0,219.6 92,216.6 92,218.6 0,221.6" fill="#f0a050" opacity="0.7"/>
<polygon points="92,205 147,190 147,222 92,222" fill="#2a1a0c" opacity="0.8"/></g></g></svg>
<div class="a" style="left:135.83px;top:83.71px;font-size:17.7px;line-height:17.7px;font-weight:400;-webkit-text-stroke:0.67px #111;color:#111;transform:scaleX(0.9701);">Disk Drill</div>
<div class="a" style="left:148.16px;top:138.18px;font-size:17.5px;line-height:17.5px;font-weight:400;color:#1c1c1c;transform:scaleX(0.9406);">Dashboard</div>
<div class="a" style="left:105.00px;top:182.95px;font-size:16px;line-height:16px;font-weight:400;-webkit-text-stroke:0.61px #111;color:#111;">Scan results</div>
<div class="a" style="left:148.80px;top:225.58px;font-size:17.5px;line-height:17.5px;font-weight:400;color:#1c1c1c;transform:scaleX(0.9177);">VendorCo ProductCode US...</div>
<div class="a" style="left:147.89px;top:269.18px;font-size:17.5px;line-height:17.5px;font-weight:400;color:#1c1c1c;transform:scaleX(0.9093);">Pictures</div>
<div class="a" style="left:148.80px;top:312.98px;font-size:17.5px;line-height:17.5px;font-weight:400;color:#1c1c1c;transform:scaleX(0.9075);">Videos</div>
<div class="a" style="left:148.80px;top:356.98px;font-size:17.5px;line-height:17.5px;font-weight:400;color:#1c1c1c;transform:scaleX(0.9563);">Audio</div>
<div class="a" style="left:147.86px;top:400.68px;font-size:17.5px;line-height:17.5px;font-weight:400;color:#1c1c1c;transform:scaleX(0.9412);">Documents</div>
<div class="a" style="left:148.80px;top:444.18px;font-size:17.5px;line-height:17.5px;font-weight:400;color:#1c1c1c;transform:scaleX(0.8938);">Archives</div>
<div class="a" style="left:148.80px;top:487.98px;font-size:17.5px;line-height:17.5px;font-weight:400;color:#1c1c1c;transform:scaleX(0.9331);">Other</div>
<div class="a" style="left:140.50px;top:866.78px;font-size:17.5px;line-height:17.5px;font-weight:400;color:#2b2b2b;transform:scaleX(0.9181);">Show scan results in Explorer</div>
<div class="a" style="left:529.30px;top:76.08px;font-size:16.2px;line-height:16.2px;font-weight:400;-webkit-text-stroke:0.62px #111;color:#111;transform:scaleX(1.0266);">Scanning “VendorCo ProductCode USB Device”</div>
<div class="a" style="left:529.30px;top:97.32px;font-size:13.2px;line-height:13.2px;font-weight:400;color:#767676;transform:scaleX(1.0612);">8% complete – 260 files / 863 MB</div>
<div class="a" style="left:1203.60px;top:85.01px;font-size:17px;line-height:17px;font-weight:400;color:#c4c4c4;transform:scaleX(0.9043);">Search</div>
<div class="a" style="left:445.59px;top:151.71px;font-size:32.7px;line-height:32.7px;font-weight:400;-webkit-text-stroke:1.24px #0f0f0f;color:#0f0f0f;transform:scaleX(1.0049);">Pictures</div>
<div class="a" style="left:444.96px;top:198.36px;font-size:23.2px;line-height:23.2px;font-weight:400;-webkit-text-stroke:0.88px #797979;color:#797979;transform:scaleX(1.0360);">62 files / 143 MB</div>
<div class="a" style="left:481.70px;top:261.14px;font-size:17.2px;line-height:17.2px;font-weight:400;color:#2a2a2a;transform:scaleX(0.9178);">Show</div>
<div class="a" style="left:622.67px;top:261.14px;font-size:17.2px;line-height:17.2px;font-weight:400;color:#1f6cbd;transform:scaleX(0.9323);">Pictures</div>
<div class="a" style="left:762.50px;top:261.14px;font-size:17.2px;line-height:17.2px;font-weight:400;color:#2a2a2a;transform:scaleX(0.9044);">File size</div>
<div class="a" style="left:875.01px;top:261.14px;font-size:17.2px;line-height:17.2px;font-weight:400;color:#2a2a2a;transform:scaleX(0.9925);">Date modified</div>
<div class="a" style="left:1037.68px;top:261.14px;font-size:17.2px;line-height:17.2px;font-weight:400;color:#9d9d9d;transform:scaleX(0.9164);">Recovery chances</div>
<div class="a" style="left:1470.70px;top:259.94px;font-size:17.2px;line-height:17.2px;font-weight:400;color:#2f7bc1;transform:scaleX(0.9024);">Reset all</div>
<div class="a" style="left:489.28px;top:324.83px;font-size:16.5px;line-height:16.5px;font-weight:400;-webkit-text-stroke:0.63px #111;color:#111;transform:scaleX(1.0225);">Name</div>
<div class="a" style="left:742.72px;top:324.83px;font-size:16.5px;line-height:16.5px;font-weight:400;-webkit-text-stroke:0.63px #111;color:#111;transform:scaleX(0.9808);">Recovery chances</div>
<div class="a" style="left:896.94px;top:324.83px;font-size:16.5px;line-height:16.5px;font-weight:400;-webkit-text-stroke:0.63px #111;color:#111;transform:scaleX(1.0603);">Date modified</div>
<div class="a" style="left:1040.50px;top:324.83px;font-size:16.5px;line-height:16.5px;font-weight:400;-webkit-text-stroke:0.63px #111;color:#111;transform:scaleX(0.9777);">Type</div>
<div class="a" style="left:1124.00px;top:324.83px;font-size:16.5px;line-height:16.5px;font-weight:400;-webkit-text-stroke:0.63px #111;color:#111;transform:scaleX(0.9085);">Size</div>
<div class="a" style="left:1258.80px;top:593.31px;font-size:19px;line-height:19px;font-weight:400;-webkit-text-stroke:0.72px #111;color:#111;transform:scaleX(1.1595);">thomas-le-pRJhn4MbsMM...</div>
<div class="a" style="left:1258.30px;top:624.84px;font-size:16.6px;line-height:16.6px;font-weight:400;color:#757575;transform:scaleX(0.9223);">JPEG Image – 3.07 MB</div>
<div class="a" style="left:1257.59px;top:652.44px;font-size:16.6px;line-height:16.6px;font-weight:400;color:#757575;transform:scaleX(1.0110);">Date modified 2/23/2026 9:56 AM</div>
<div class="a" style="left:1257.21px;top:699.30px;font-size:15px;line-height:15px;font-weight:400;-webkit-text-stroke:0.57px #111;color:#111;transform:scaleX(1.0944);">Path</div>
<div class="a" style="left:1258.30px;top:719.55px;font-size:14px;line-height:14px;font-weight:400;color:#7a7a7a;transform:scaleX(1.0261);">\Existing\mydrive (D)\thomas-le-</div>
<div class="a" style="left:1258.50px;top:737.95px;font-size:14px;line-height:14px;font-weight:400;color:#7a7a7a;transform:scaleX(1.0082);">pRJhn4MbsMM-unsplash.jpg</div>
<div class="a" style="left:1257.25px;top:782.76px;font-size:15.4px;line-height:15.4px;font-weight:400;-webkit-text-stroke:0.59px #111;color:#111;transform:scaleX(1.0492);">Recovery chances</div>
<div class="a" style="left:1258.00px;top:803.96px;font-size:15.4px;line-height:15.4px;font-weight:400;color:#6c6c6c;transform:scaleX(1.0594);">Waiting...</div>
<div class="a" style="left:441.40px;top:866.61px;font-size:17px;line-height:17px;font-weight:400;color:#727272;transform:scaleX(0.9682);">&lt;1m elapsed, 0h 9m remaining, block 2447941 of 29214116</div>
<div class="a" style="left:1101.00px;top:867.41px;font-size:17px;line-height:17px;font-weight:400;color:#5f5f5f;transform:scaleX(0.9601);">60 files (137 MB) selected, 260 files total</div>
<div class="a" style="left:1454.68px;top:866.61px;font-size:17px;line-height:17px;font-weight:400;color:#ffffff;transform:scaleX(0.9163);">Recover</div>
<div class="a" style="left:581.60px;top:368.79px;font-size:15.6px;line-height:15.6px;font-weight:400;color:#1e1e1e;transform:scaleX(1.0031);">anna-tukhfatullina-...</div>
<div class="a" style="left:738.00px;top:369.89px;font-size:14.3px;line-height:14.3px;font-weight:400;color:#6e6e6e;transform:scaleX(0.9727);">Waiting...</div>
<div class="a" style="left:901.40px;top:367.70px;font-size:15px;line-height:15px;font-weight:400;color:#6b6b6b;transform:scaleX(0.9427);">2/18/2026 6:34 A...</div>
<div class="a" style="left:1044.20px;top:367.70px;font-size:15px;line-height:15px;font-weight:400;color:#6b6b6b;transform:scaleX(0.8038);">JPEG I...</div>
<div class="a" style="left:1127.50px;top:367.70px;font-size:15px;line-height:15px;font-weight:400;color:#6b6b6b;transform:scaleX(0.9042);">1.59 MB</div>
<div class="a" style="left:581.60px;top:407.79px;font-size:15.6px;line-height:15.6px;font-weight:400;color:#1e1e1e;transform:scaleX(0.9499);">anne-preble-SAPvK...</div>
<div class="a" style="left:738.00px;top:408.89px;font-size:14.3px;line-height:14.3px;font-weight:400;color:#6e6e6e;transform:scaleX(0.9727);">Waiting...</div>
<div class="a" style="left:901.40px;top:406.70px;font-size:15px;line-height:15px;font-weight:400;color:#6b6b6b;transform:scaleX(0.9427);">2/23/2026 9:57 A...</div>
<div class="a" style="left:1044.20px;top:406.70px;font-size:15px;line-height:15px;font-weight:400;color:#6b6b6b;transform:scaleX(0.8038);">JPEG I...</div>
<div class="a" style="left:1128.40px;top:406.70px;font-size:15px;line-height:15px;font-weight:400;color:#6b6b6b;transform:scaleX(0.9042);">3.68 MB</div>
<div class="a" style="left:581.60px;top:446.79px;font-size:15.6px;line-height:15.6px;font-weight:400;color:#1e1e1e;transform:scaleX(0.9847);">antonio-araujo-3R...</div>
<div class="a" style="left:738.00px;top:447.89px;font-size:14.3px;line-height:14.3px;font-weight:400;color:#6e6e6e;transform:scaleX(0.9727);">Waiting...</div>
<div class="a" style="left:901.40px;top:445.70px;font-size:15px;line-height:15px;font-weight:400;color:#6b6b6b;transform:scaleX(0.9427);">2/23/2026 9:57 A...</div>
<div class="a" style="left:1044.20px;top:445.70px;font-size:15px;line-height:15px;font-weight:400;color:#6b6b6b;transform:scaleX(0.8038);">JPEG I...</div>
<div class="a" style="left:1128.40px;top:445.70px;font-size:15px;line-height:15px;font-weight:400;color:#6b6b6b;transform:scaleX(0.9042);">3.92 MB</div>
<div class="a" style="left:580.60px;top:485.79px;font-size:15.6px;line-height:15.6px;font-weight:400;color:#1e1e1e;">brooke-lark-C1fMH...</div>
<div class="a" style="left:738.00px;top:486.89px;font-size:14.3px;line-height:14.3px;font-weight:400;color:#6e6e6e;transform:scaleX(0.9727);">Waiting...</div>
<div class="a" style="left:901.40px;top:484.70px;font-size:15px;line-height:15px;font-weight:400;color:#6b6b6b;transform:scaleX(0.9427);">2/18/2026 6:34 A...</div>
<div class="a" style="left:1044.20px;top:484.70px;font-size:15px;line-height:15px;font-weight:400;color:#6b6b6b;transform:scaleX(0.8038);">JPEG I...</div>
<div class="a" style="left:1127.50px;top:484.70px;font-size:15px;line-height:15px;font-weight:400;color:#6b6b6b;transform:scaleX(0.9042);">1.75 MB</div>
<div class="a" style="left:581.60px;top:524.79px;font-size:15.6px;line-height:15.6px;font-weight:400;color:#1e1e1e;transform:scaleX(0.9505);">cindy-chan-1D_QE...</div>
<div class="a" style="left:738.00px;top:525.89px;font-size:14.3px;line-height:14.3px;font-weight:400;color:#6e6e6e;transform:scaleX(0.9727);">Waiting...</div>
<div class="a" style="left:901.40px;top:523.70px;font-size:15px;line-height:15px;font-weight:400;color:#6b6b6b;transform:scaleX(0.9427);">2/23/2026 9:57 A...</div>
<div class="a" style="left:1044.20px;top:523.70px;font-size:15px;line-height:15px;font-weight:400;color:#6b6b6b;transform:scaleX(0.8038);">JPEG I...</div>
<div class="a" style="left:1128.40px;top:523.70px;font-size:15px;line-height:15px;font-weight:400;color:#6b6b6b;transform:scaleX(0.9042);">2.18 MB</div>
<div class="a" style="left:581.60px;top:563.79px;font-size:15.6px;line-height:15.6px;font-weight:400;color:#1e1e1e;transform:scaleX(0.9380);">dane-deaner-BVLVJ...</div>
<div class="a" style="left:738.00px;top:564.89px;font-size:14.3px;line-height:14.3px;font-weight:400;color:#6e6e6e;transform:scaleX(0.9727);">Waiting...</div>
<div class="a" style="left:901.40px;top:562.70px;font-size:15px;line-height:15px;font-weight:400;color:#6b6b6b;transform:scaleX(0.9427);">2/23/2026 9:57 A...</div>
<div class="a" style="left:1044.20px;top:562.70px;font-size:15px;line-height:15px;font-weight:400;color:#6b6b6b;transform:scaleX(0.8038);">JPEG I...</div>
<div class="a" style="left:1128.40px;top:562.70px;font-size:15px;line-height:15px;font-weight:400;color:#6b6b6b;transform:scaleX(0.9042);">4.21 MB</div>
<div class="a" style="left:580.60px;top:602.79px;font-size:15.6px;line-height:15.6px;font-weight:400;color:#1e1e1e;">marcos-paulo-prad...</div>
<div class="a" style="left:738.00px;top:603.89px;font-size:14.3px;line-height:14.3px;font-weight:400;color:#6e6e6e;transform:scaleX(0.9727);">Waiting...</div>
<div class="a" style="left:901.40px;top:601.70px;font-size:15px;line-height:15px;font-weight:400;color:#6b6b6b;transform:scaleX(0.9427);">2/23/2026 9:57 A...</div>
<div class="a" style="left:1044.20px;top:601.70px;font-size:15px;line-height:15px;font-weight:400;color:#6b6b6b;transform:scaleX(0.8038);">JPEG I...</div>
<div class="a" style="left:1128.40px;top:601.70px;font-size:15px;line-height:15px;font-weight:400;color:#6b6b6b;transform:scaleX(0.9042);">3.56 MB</div>
<div class="a" style="left:580.60px;top:641.79px;font-size:15.6px;line-height:15.6px;font-weight:400;color:#1e1e1e;">michele-blackwell-r...</div>
<div class="a" style="left:738.00px;top:642.89px;font-size:14.3px;line-height:14.3px;font-weight:400;color:#6e6e6e;transform:scaleX(0.9727);">Waiting...</div>
<div class="a" style="left:901.40px;top:640.70px;font-size:15px;line-height:15px;font-weight:400;color:#6b6b6b;transform:scaleX(0.9427);">2/18/2026 6:34 A...</div>
<div class="a" style="left:1044.20px;top:640.70px;font-size:15px;line-height:15px;font-weight:400;color:#6b6b6b;transform:scaleX(0.8038);">JPEG I...</div>
<div class="a" style="left:1128.40px;top:640.70px;font-size:15px;line-height:15px;font-weight:400;color:#6b6b6b;transform:scaleX(0.9042);">3.66 MB</div>
<div class="a" style="left:580.61px;top:680.79px;font-size:15.6px;line-height:15.6px;font-weight:400;color:#1e1e1e;transform:scaleX(0.9909);">no-revisions-gA81...</div>
<div class="a" style="left:738.00px;top:681.89px;font-size:14.3px;line-height:14.3px;font-weight:400;color:#6e6e6e;transform:scaleX(0.9727);">Waiting...</div>
<div class="a" style="left:901.40px;top:679.70px;font-size:15px;line-height:15px;font-weight:400;color:#6b6b6b;transform:scaleX(0.9427);">2/18/2026 6:34 A...</div>
<div class="a" style="left:1044.20px;top:679.70px;font-size:15px;line-height:15px;font-weight:400;color:#6b6b6b;transform:scaleX(0.8038);">JPEG I...</div>
<div class="a" style="left:1128.40px;top:679.70px;font-size:15px;line-height:15px;font-weight:400;color:#6b6b6b;transform:scaleX(0.9042);">3.75 MB</div>
<div class="a" style="left:581.60px;top:719.79px;font-size:15.6px;line-height:15.6px;font-weight:400;color:#1e1e1e;transform:scaleX(0.9854);">odiseo-castrejon-1...</div>
<div class="a" style="left:738.00px;top:720.89px;font-size:14.3px;line-height:14.3px;font-weight:400;color:#6e6e6e;transform:scaleX(0.9727);">Waiting...</div>
<div class="a" style="left:901.40px;top:718.70px;font-size:15px;line-height:15px;font-weight:400;color:#6b6b6b;transform:scaleX(0.9427);">2/18/2026 6:34 A...</div>
<div class="a" style="left:1044.20px;top:718.70px;font-size:15px;line-height:15px;font-weight:400;color:#6b6b6b;transform:scaleX(0.8038);">JPEG I...</div>
<div class="a" style="left:1127.50px;top:718.70px;font-size:15px;line-height:15px;font-weight:400;color:#6b6b6b;transform:scaleX(0.9042);">1.86 MB</div>
<div class="a" style="left:581.60px;top:758.79px;font-size:15.6px;line-height:15.6px;font-weight:400;color:#1e1e1e;transform:scaleX(0.9854);">odiseo-castrejon-1...</div>
<div class="a" style="left:738.00px;top:759.89px;font-size:14.3px;line-height:14.3px;font-weight:400;color:#6e6e6e;transform:scaleX(0.9727);">Waiting...</div>
<div class="a" style="left:901.40px;top:757.70px;font-size:15px;line-height:15px;font-weight:400;color:#6b6b6b;transform:scaleX(0.9427);">2/18/2026 6:34 A...</div>
<div class="a" style="left:1044.20px;top:757.70px;font-size:15px;line-height:15px;font-weight:400;color:#6b6b6b;transform:scaleX(0.8038);">JPEG I...</div>
<div class="a" style="left:1128.40px;top:757.70px;font-size:15px;line-height:15px;font-weight:400;color:#6b6b6b;transform:scaleX(0.9042);">3.23 MB</div>
<div class="a" style="left:581.60px;top:797.79px;font-size:15.6px;line-height:15.6px;font-weight:400;color:#1e1e1e;transform:scaleX(0.9968);">olayinka-babalola-r...</div>
<div class="a" style="left:738.00px;top:798.89px;font-size:14.3px;line-height:14.3px;font-weight:400;color:#6e6e6e;transform:scaleX(0.9727);">Waiting...</div>
<div class="a" style="left:901.40px;top:796.70px;font-size:15px;line-height:15px;font-weight:400;color:#6b6b6b;transform:scaleX(0.9427);">2/18/2026 6:34 A...</div>
<div class="a" style="left:1044.20px;top:796.70px;font-size:15px;line-height:15px;font-weight:400;color:#6b6b6b;transform:scaleX(0.8038);">JPEG I...</div>
<div class="a" style="left:1128.40px;top:796.70px;font-size:15px;line-height:15px;font-weight:400;color:#6b6b6b;transform:scaleX(0.9042);">968 KB</div>
<div class="a" style="left:370.01px;top:226.15px;font-size:14px;line-height:14px;font-weight:400;color:#222;">260</div>
<div class="a" style="left:376.71px;top:269.95px;font-size:14px;line-height:14px;font-weight:400;color:#222;">62</div>
<div class="a" style="left:376.21px;top:313.55px;font-size:14px;line-height:14px;font-weight:400;color:#222;">18</div>
<div class="a" style="left:380.60px;top:357.55px;font-size:14px;line-height:14px;font-weight:400;color:#222;">2</div>
<div class="a" style="left:376.21px;top:401.25px;font-size:14px;line-height:14px;font-weight:400;color:#222;">18</div>
<div class="a" style="left:380.60px;top:444.55px;font-size:14px;line-height:14px;font-weight:400;color:#222;">3</div>
<div class="a" style="left:369.51px;top:488.55px;font-size:14px;line-height:14px;font-weight:400;color:#222;">157</div>
</body></html>
